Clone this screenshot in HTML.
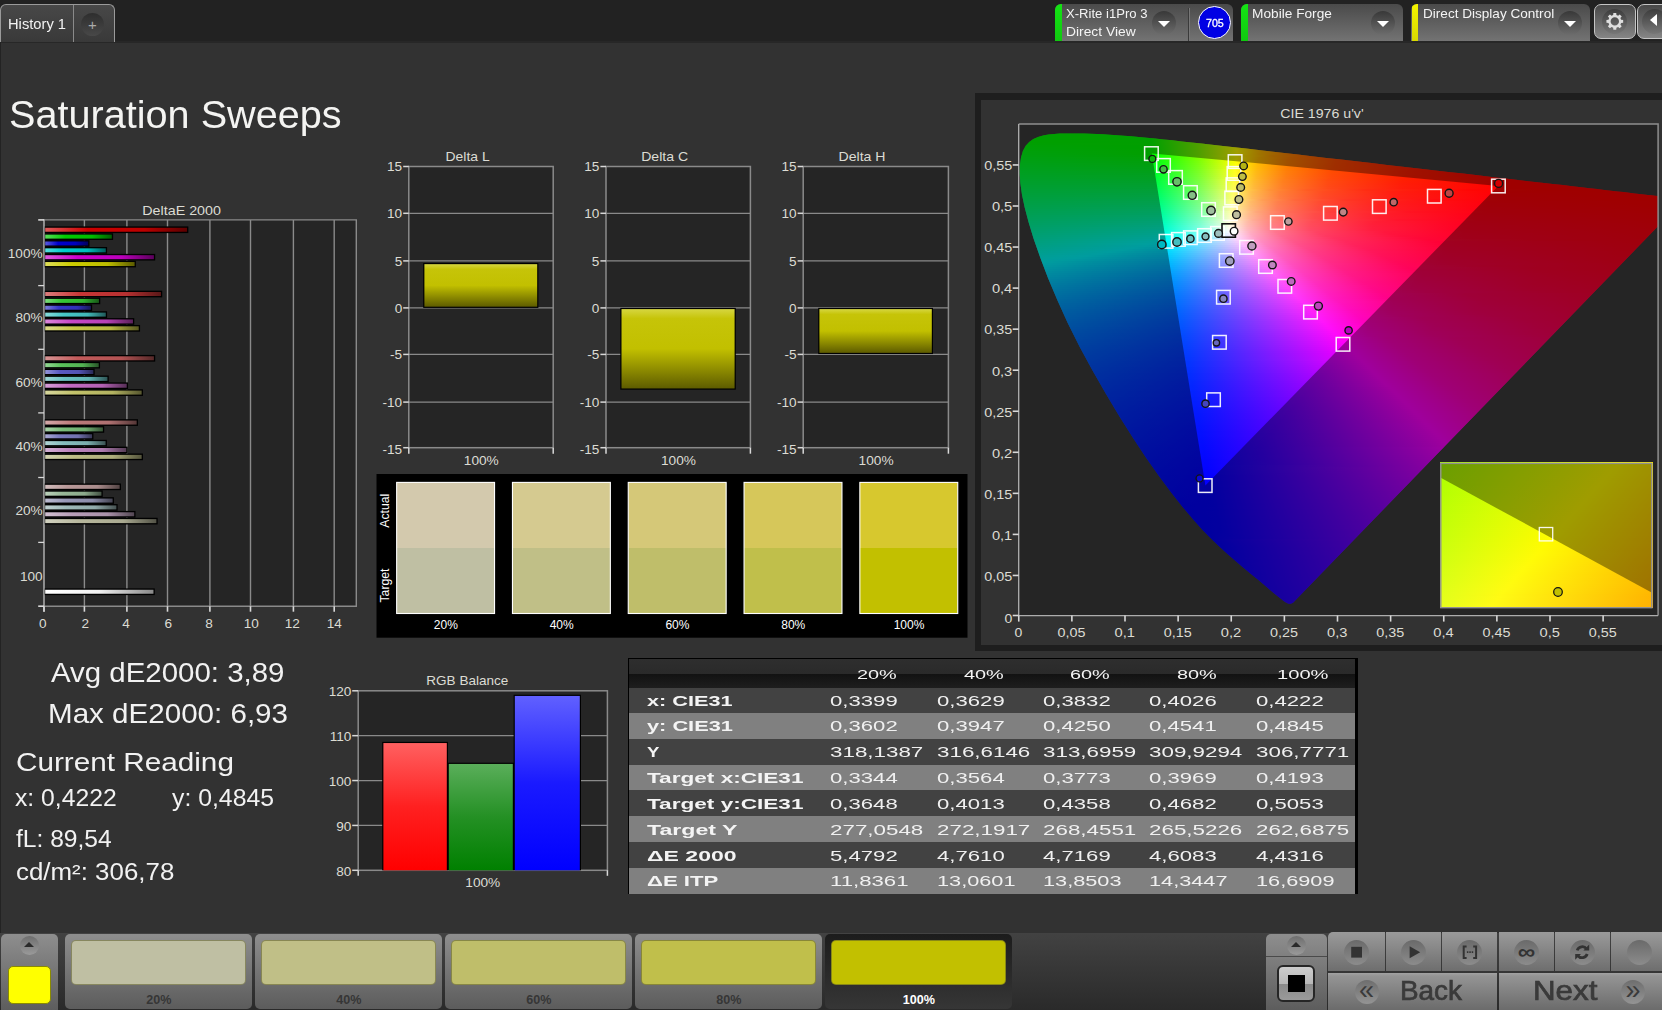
<!DOCTYPE html>
<html lang="en"><head><meta charset="utf-8"><title>Saturation Sweeps</title>
<style>
html,body{margin:0;padding:0;background:#323232;}
body{width:1662px;height:1010px;overflow:hidden;font-family:"Liberation Sans",sans-serif;color:#f0f0f0;}
#app{position:relative;width:1662px;height:1010px;overflow:hidden;background:#323232;}
.a{position:absolute;}
.t{position:absolute;white-space:nowrap;line-height:1;transform-origin:0 50%;}
svg{position:absolute;left:0;top:0;overflow:visible;}
svg text{font-family:"Liberation Sans",sans-serif;}
.cg i{position:absolute;display:block;}

</style></head><body>
<div id="app">
<div class="a" style="left:0;top:0;width:1662px;height:41.2px;background:#222"></div>
<div class="a" style="left:0;top:41.2px;width:1662px;height:1.4px;background:#272727"></div>
<div class="a" style="left:0;top:41px;width:1.3px;height:969px;background:#232323"></div>
<div class="a" style="left:0;top:4px;width:115px;height:37.5px;box-sizing:border-box;border:1px solid #9a9a9a;border-bottom:none;border-radius:6px 6px 0 0;background:linear-gradient(#484848,#393939)"></div>
<div class="a" style="left:73px;top:5px;width:1px;height:37px;background:#8a8a8a"></div>
<div class="t m" style="left:8.00px;top:16.45px;font-size:15.3px;color:#f2f2f2;transform:scaleX(0.9609);">History 1</div>
<div class="a" style="left:81px;top:13px;width:23px;height:23px;border-radius:50%;background:linear-gradient(#2e2e2e,#484848)"></div>
<div class="t" style="left:87px;top:17px;width:11px;text-align:center;font-size:15px;color:#aaa">+</div>
<div class="a" style="left:1054.8px;top:4px;width:178.4px;height:37.4px;border-radius:6px 6px 0 0;overflow:hidden;background:linear-gradient(#4a4a4a,#737373)"><div class="a" style="left:0.3px;top:0;width:6.6px;height:38px;background:linear-gradient(#14e414,#10c810)"></div></div>
<div class="t m" style="left:1066.00px;top:8.52px;font-size:11.9px;color:#f4f4f4;transform:scaleX(1.1011);">X-Rite i1Pro 3</div>
<div class="t m" style="left:1066.00px;top:26.82px;font-size:11.9px;color:#f4f4f4;transform:scaleX(1.1632);">Direct View</div>
<div class="a" style="left:1152.1px;top:11px;width:24px;height:24px;border-radius:50%;background:linear-gradient(#383838,#6c6c6c)"></div>
<div class="a" style="left:1158.1px;top:21px;width:0;height:0;border-left:6px solid transparent;border-right:6px solid transparent;border-top:6.5px solid #fff"></div>
<div class="a" style="left:1188px;top:8px;width:1px;height:33px;background:#3a3a3a"></div><div class="a" style="left:1189px;top:8px;width:1px;height:33px;background:#777"></div>
<div class="a" style="left:1198px;top:6.3px;width:31px;height:31px;border-radius:50%;border:1px solid #fff;background:#0000e4"></div>
<div class="t m" style="left:1206.10px;top:17.52px;font-size:10.6px;color:#fff;transform:scaleX(1.0064);-webkit-text-stroke:.3px #fff;">705</div>
<div class="a" style="left:1241px;top:4px;width:161.8px;height:37.4px;border-radius:6px 6px 0 0;overflow:hidden;background:linear-gradient(#4a4a4a,#737373)"><div class="a" style="left:0.3px;top:0;width:6.6px;height:38px;background:linear-gradient(#14e414,#10c810)"></div></div>
<div class="t m" style="left:1252.20px;top:8.52px;font-size:11.9px;color:#f4f4f4;transform:scaleX(1.1512);">Mobile Forge</div>
<div class="a" style="left:1370.8px;top:11px;width:24px;height:24px;border-radius:50%;background:linear-gradient(#383838,#6c6c6c)"></div>
<div class="a" style="left:1376.8px;top:21px;width:0;height:0;border-left:6px solid transparent;border-right:6px solid transparent;border-top:6.5px solid #fff"></div>
<div class="a" style="left:1411.4px;top:4px;width:178.5px;height:37.4px;border-radius:6px 6px 0 0;overflow:hidden;background:linear-gradient(#4a4a4a,#737373)"><div class="a" style="left:0.3px;top:0;width:6.6px;height:38px;background:linear-gradient(#f4f400,#d8d800)"></div></div>
<div class="t m" style="left:1422.60px;top:8.52px;font-size:11.9px;color:#f4f4f4;transform:scaleX(1.1410);">Direct Display Control</div>
<div class="a" style="left:1558px;top:11px;width:24px;height:24px;border-radius:50%;background:linear-gradient(#383838,#6c6c6c)"></div>
<div class="a" style="left:1564px;top:21px;width:0;height:0;border-left:6px solid transparent;border-right:6px solid transparent;border-top:6.5px solid #fff"></div>
<div class="a" style="left:1594px;top:4px;width:42px;height:35px;box-sizing:border-box;border:1px solid #c4c4c4;border-radius:7px;background:linear-gradient(#484848,#858585)"></div>
<div class="a" style="left:1602.3px;top:9px;width:25px;height:25px;border-radius:50%;background:linear-gradient(#3c3c3c,#777)"></div>
<svg width="1662" height="60" viewBox="0 0 1662 60"><path d="M1613.34,13.03 L1616.26,13.03 L1616.42,15.10 L1618.11,15.81 L1619.69,14.45 L1621.75,16.51 L1620.39,18.09 L1621.10,19.78 L1623.17,19.94 L1623.17,22.86 L1621.10,23.02 L1620.39,24.71 L1621.75,26.29 L1619.69,28.35 L1618.11,26.99 L1616.42,27.70 L1616.26,29.77 L1613.34,29.77 L1613.18,27.70 L1611.49,26.99 L1609.91,28.35 L1607.85,26.29 L1609.21,24.71 L1608.50,23.02 L1606.43,22.86 L1606.43,19.94 L1608.50,19.78 L1609.21,18.09 L1607.85,16.51 L1609.91,14.45 L1611.49,15.81 L1613.18,15.10Z M1610.60,21.40 a4.20,4.20 0 1,0 8.40,0 a4.20,4.20 0 1,0 -8.40,0Z" fill="#dedede" fill-rule="evenodd"/></svg>
<div class="a" style="left:1637px;top:4px;width:42px;height:35px;box-sizing:border-box;border:1px solid #c4c4c4;border-radius:7px;background:linear-gradient(#484848,#858585)"></div>
<div class="a" style="left:1642px;top:9px;width:25px;height:25px;border-radius:50%;background:linear-gradient(#3c3c3c,#777)"></div>
<div class="a" style="left:1650px;top:14.4px;width:0;height:0;border-top:6.2px solid transparent;border-bottom:6.2px solid transparent;border-right:7px solid #fff"></div>
<div class="t m" style="left:8.70px;top:95.11px;font-size:39.2px;color:#f4f4f2;transform:scaleX(1.0111);">Saturation Sweeps</div>
<div class="t m" style="left:50.50px;top:660.12px;font-size:26.9px;color:#f2f2f2;transform:scaleX(1.0946);">Avg dE2000: 3,89</div>
<div class="t m" style="left:48.00px;top:700.52px;font-size:26.9px;color:#f2f2f2;transform:scaleX(1.0996);">Max dE2000: 6,93</div>
<div class="t m" style="left:15.90px;top:749.16px;font-size:26.5px;color:#f2f2f2;transform:scaleX(1.1206);">Current Reading</div>
<div class="t m" style="left:15.30px;top:786.84px;font-size:23.1px;color:#f2f2f2;transform:scaleX(1.0704);">x: 0,4222</div>
<div class="t m" style="left:171.80px;top:786.84px;font-size:23.1px;color:#f2f2f2;transform:scaleX(1.0735);">y: 0,4845</div>
<div class="t m" style="left:15.90px;top:828.24px;font-size:23.1px;color:#f2f2f2;transform:scaleX(1.0646);">fL: 89,54</div>
<div class="t m" style="left:15.90px;top:861.24px;font-size:23.1px;color:#f2f2f2;transform:scaleX(1.1211);">cd/m²: 306,78</div>
<svg width="1662" height="1010" viewBox="0 0 1662 1010"><defs><linearGradient id="hb1"><stop offset="0" stop-color="#de5959"/><stop offset=".3" stop-color="#c00"/><stop offset=".7" stop-color="#bc0000"/><stop offset="1" stop-color="#5c0000"/></linearGradient><linearGradient id="hb2"><stop offset="0" stop-color="#59de59"/><stop offset=".3" stop-color="#0c0"/><stop offset=".7" stop-color="#00bc00"/><stop offset="1" stop-color="#005c00"/></linearGradient><linearGradient id="hb3"><stop offset="0" stop-color="#5959de"/><stop offset=".3" stop-color="#00c"/><stop offset=".7" stop-color="#0000bc"/><stop offset="1" stop-color="#00005c"/></linearGradient><linearGradient id="hb4"><stop offset="0" stop-color="#59dede"/><stop offset=".3" stop-color="#0cc"/><stop offset=".7" stop-color="#00bcbc"/><stop offset="1" stop-color="#005c5c"/></linearGradient><linearGradient id="hb5"><stop offset="0" stop-color="#de59de"/><stop offset=".3" stop-color="#c0c"/><stop offset=".7" stop-color="#bc00bc"/><stop offset="1" stop-color="#5c005c"/></linearGradient><linearGradient id="hb6"><stop offset="0" stop-color="#dede59"/><stop offset=".3" stop-color="#cc0"/><stop offset=".7" stop-color="#bcbc00"/><stop offset="1" stop-color="#5c5c00"/></linearGradient><linearGradient id="hb7"><stop offset="0" stop-color="#db7c7c"/><stop offset=".3" stop-color="#c73636"/><stop offset=".7" stop-color="#b73131"/><stop offset="1" stop-color="#5a1818"/></linearGradient><linearGradient id="hb8"><stop offset="0" stop-color="#7cdb7c"/><stop offset=".3" stop-color="#36c736"/><stop offset=".7" stop-color="#31b731"/><stop offset="1" stop-color="#185a18"/></linearGradient><linearGradient id="hb9"><stop offset="0" stop-color="#7c7cdb"/><stop offset=".3" stop-color="#3636c7"/><stop offset=".7" stop-color="#3131b7"/><stop offset="1" stop-color="#18185a"/></linearGradient><linearGradient id="hb10"><stop offset="0" stop-color="#87dbdb"/><stop offset=".3" stop-color="#47c7c7"/><stop offset=".7" stop-color="#41b7b7"/><stop offset="1" stop-color="#205a5a"/></linearGradient><linearGradient id="hb11"><stop offset="0" stop-color="#db87db"/><stop offset=".3" stop-color="#c747c7"/><stop offset=".7" stop-color="#b741b7"/><stop offset="1" stop-color="#5a205a"/></linearGradient><linearGradient id="hb12"><stop offset="0" stop-color="#dbdb87"/><stop offset=".3" stop-color="#c7c747"/><stop offset=".7" stop-color="#b7b741"/><stop offset="1" stop-color="#5a5a20"/></linearGradient><linearGradient id="hb13"><stop offset="0" stop-color="#d79494"/><stop offset=".3" stop-color="#c25a5a"/><stop offset=".7" stop-color="#b35353"/><stop offset="1" stop-color="#572929"/></linearGradient><linearGradient id="hb14"><stop offset="0" stop-color="#94d794"/><stop offset=".3" stop-color="#5ac25a"/><stop offset=".7" stop-color="#53b353"/><stop offset="1" stop-color="#295729"/></linearGradient><linearGradient id="hb15"><stop offset="0" stop-color="#9494d7"/><stop offset=".3" stop-color="#5a5ac2"/><stop offset=".7" stop-color="#5353b3"/><stop offset="1" stop-color="#292957"/></linearGradient><linearGradient id="hb16"><stop offset="0" stop-color="#9ed7d7"/><stop offset=".3" stop-color="#6ac2c2"/><stop offset=".7" stop-color="#61b3b3"/><stop offset="1" stop-color="#2f5757"/></linearGradient><linearGradient id="hb17"><stop offset="0" stop-color="#d79ed7"/><stop offset=".3" stop-color="#c26ac2"/><stop offset=".7" stop-color="#b361b3"/><stop offset="1" stop-color="#572f57"/></linearGradient><linearGradient id="hb18"><stop offset="0" stop-color="#d7d79e"/><stop offset=".3" stop-color="#c2c26a"/><stop offset=".7" stop-color="#b3b361"/><stop offset="1" stop-color="#57572f"/></linearGradient><linearGradient id="hb19"><stop offset="0" stop-color="#d4a9a9"/><stop offset=".3" stop-color="#bd7a7a"/><stop offset=".7" stop-color="#ae7171"/><stop offset="1" stop-color="#553737"/></linearGradient><linearGradient id="hb20"><stop offset="0" stop-color="#a9d4a9"/><stop offset=".3" stop-color="#7abd7a"/><stop offset=".7" stop-color="#71ae71"/><stop offset="1" stop-color="#375537"/></linearGradient><linearGradient id="hb21"><stop offset="0" stop-color="#a9a9d4"/><stop offset=".3" stop-color="#7a7abd"/><stop offset=".7" stop-color="#7171ae"/><stop offset="1" stop-color="#373755"/></linearGradient><linearGradient id="hb22"><stop offset="0" stop-color="#b0d4d4"/><stop offset=".3" stop-color="#85bdbd"/><stop offset=".7" stop-color="#7baeae"/><stop offset="1" stop-color="#3c5555"/></linearGradient><linearGradient id="hb23"><stop offset="0" stop-color="#d4b0d4"/><stop offset=".3" stop-color="#bd85bd"/><stop offset=".7" stop-color="#ae7bae"/><stop offset="1" stop-color="#553c55"/></linearGradient><linearGradient id="hb24"><stop offset="0" stop-color="#d4d4b0"/><stop offset=".3" stop-color="#bdbd85"/><stop offset=".7" stop-color="#aeae7b"/><stop offset="1" stop-color="#55553c"/></linearGradient><linearGradient id="hb25"><stop offset="0" stop-color="#d1bcbc"/><stop offset=".3" stop-color="#b89898"/><stop offset=".7" stop-color="#aa8c8c"/><stop offset="1" stop-color="#534444"/></linearGradient><linearGradient id="hb26"><stop offset="0" stop-color="#bcd1bc"/><stop offset=".3" stop-color="#98b898"/><stop offset=".7" stop-color="#8caa8c"/><stop offset="1" stop-color="#445344"/></linearGradient><linearGradient id="hb27"><stop offset="0" stop-color="#bcbcd1"/><stop offset=".3" stop-color="#9898b8"/><stop offset=".7" stop-color="#8c8caa"/><stop offset="1" stop-color="#444453"/></linearGradient><linearGradient id="hb28"><stop offset="0" stop-color="#c0d1d1"/><stop offset=".3" stop-color="#9eb8b8"/><stop offset=".7" stop-color="#91aaaa"/><stop offset="1" stop-color="#475353"/></linearGradient><linearGradient id="hb29"><stop offset="0" stop-color="#d1c0d1"/><stop offset=".3" stop-color="#b89eb8"/><stop offset=".7" stop-color="#aa91aa"/><stop offset="1" stop-color="#534753"/></linearGradient><linearGradient id="hb30"><stop offset="0" stop-color="#d1d1c0"/><stop offset=".3" stop-color="#b8b89e"/><stop offset=".7" stop-color="#aaaa91"/><stop offset="1" stop-color="#535347"/></linearGradient><linearGradient id="hbw"><stop offset="0" stop-color="#fff"/><stop offset=".5" stop-color="#f0f0f0"/><stop offset="1" stop-color="#8a8a8a"/></linearGradient><linearGradient id="yb" x1="0" y1="0" x2="0" y2="1"><stop offset="0" stop-color="#d6d640"/><stop offset=".12" stop-color="#c6c408"/><stop offset=".5" stop-color="#c2c000"/><stop offset="1" stop-color="#5e5c00"/></linearGradient><linearGradient id="gr" x1="0" y1="0" x2="0" y2="1"><stop offset="0" stop-color="#ff6060"/><stop offset=".5" stop-color="#ff2020"/><stop offset="1" stop-color="#ff0000"/></linearGradient><linearGradient id="gg" x1="0" y1="0" x2="0" y2="1"><stop offset="0" stop-color="#5aae5a"/><stop offset=".5" stop-color="#249024"/><stop offset="1" stop-color="#008000"/></linearGradient><linearGradient id="gb" x1="0" y1="0" x2="0" y2="1"><stop offset="0" stop-color="#6060ff"/><stop offset=".5" stop-color="#1a1aff"/><stop offset="1" stop-color="#0000ff"/></linearGradient></defs>
<rect x="44" y="219.9" width="312.3" height="386.3" fill="#252525" stroke="none" stroke-width="1"/>
<path d="M84.4,219.9L84.4,606.2" stroke="#8a8a8a" stroke-width="1.4" fill="none"/>
<path d="M126.9,219.9L126.9,606.2" stroke="#8a8a8a" stroke-width="1.4" fill="none"/>
<path d="M167.5,219.9L167.5,606.2" stroke="#8a8a8a" stroke-width="1.4" fill="none"/>
<path d="M209.9,219.9L209.9,606.2" stroke="#8a8a8a" stroke-width="1.4" fill="none"/>
<path d="M250.5,219.9L250.5,606.2" stroke="#8a8a8a" stroke-width="1.4" fill="none"/>
<path d="M293.4,219.9L293.4,606.2" stroke="#8a8a8a" stroke-width="1.4" fill="none"/>
<path d="M334.2,219.9L334.2,606.2" stroke="#8a8a8a" stroke-width="1.4" fill="none"/>
<path d="M44,219.9H356.3V606.2H44" stroke="#8a8a8a" stroke-width="1.4" fill="none"/>
<path d="M44,219.2L44,611.7" stroke="#a8a8a8" stroke-width="1.6" fill="none"/>
<path d="M44,606.2L44,611.7" stroke="#d8d8d8" stroke-width="1.6" fill="none"/>
<text x="42.9" y="627.7" font-size="13.6" text-anchor="middle" fill="#dcdcd4">0</text>
<path d="M84.4,606.2L84.4,611.7" stroke="#d8d8d8" stroke-width="1.6" fill="none"/>
<text x="85.2" y="627.7" font-size="13.6" text-anchor="middle" fill="#dcdcd4">2</text>
<path d="M126.9,606.2L126.9,611.7" stroke="#d8d8d8" stroke-width="1.6" fill="none"/>
<text x="126.1" y="627.7" font-size="13.6" text-anchor="middle" fill="#dcdcd4">4</text>
<path d="M167.5,606.2L167.5,611.7" stroke="#d8d8d8" stroke-width="1.6" fill="none"/>
<text x="168.2" y="627.7" font-size="13.6" text-anchor="middle" fill="#dcdcd4">6</text>
<path d="M209.9,606.2L209.9,611.7" stroke="#d8d8d8" stroke-width="1.6" fill="none"/>
<text x="209.1" y="627.7" font-size="13.6" text-anchor="middle" fill="#dcdcd4">8</text>
<path d="M250.5,606.2L250.5,611.7" stroke="#d8d8d8" stroke-width="1.6" fill="none"/>
<text x="251.2" y="627.7" font-size="13.6" text-anchor="middle" fill="#dcdcd4">10</text>
<path d="M293.4,606.2L293.4,611.7" stroke="#d8d8d8" stroke-width="1.6" fill="none"/>
<text x="292.3" y="627.7" font-size="13.6" text-anchor="middle" fill="#dcdcd4">12</text>
<path d="M334.2,606.2L334.2,611.7" stroke="#d8d8d8" stroke-width="1.6" fill="none"/>
<text x="334.2" y="627.7" font-size="13.6" text-anchor="middle" fill="#dcdcd4">14</text>
<path d="M38.2,219.9L44,219.9" stroke="#d8d8d8" stroke-width="1.6" fill="none"/>
<path d="M38.2,285.6L44,285.6" stroke="#d8d8d8" stroke-width="1.3" fill="none"/>
<path d="M38.2,349.3L44,349.3" stroke="#d8d8d8" stroke-width="1.3" fill="none"/>
<path d="M38.2,412.9L44,412.9" stroke="#d8d8d8" stroke-width="1.3" fill="none"/>
<path d="M38.2,477.5L44,477.5" stroke="#d8d8d8" stroke-width="1.3" fill="none"/>
<path d="M38.2,542.4L44,542.4" stroke="#d8d8d8" stroke-width="1.3" fill="none"/>
<path d="M38.2,606.2L44,606.2" stroke="#d8d8d8" stroke-width="1.6" fill="none"/>
<text x="42.6" y="258.1" font-size="13.6" text-anchor="end" fill="#dcdcd4">100%</text>
<text x="42.6" y="322" font-size="13.6" text-anchor="end" fill="#dcdcd4">80%</text>
<text x="42.6" y="387.2" font-size="13.6" text-anchor="end" fill="#dcdcd4">60%</text>
<text x="42.6" y="450.7" font-size="13.6" text-anchor="end" fill="#dcdcd4">40%</text>
<text x="42.6" y="515" font-size="13.6" text-anchor="end" fill="#dcdcd4">20%</text>
<text x="42.6" y="580.9" font-size="13.6" text-anchor="end" fill="#dcdcd4">100</text>
<text x="181.6" y="215" font-size="13.6" text-anchor="middle" fill="#dcdcd4" textLength="78.7" lengthAdjust="spacingAndGlyphs">DeltaE 2000</text>
<rect x="44.8" y="226.4" width="143.559" height="6.7" fill="#000" stroke="none" stroke-width="1"/>
<rect x="45.2" y="227.75" width="141.859" height="4" fill="url(#hb1)" stroke="none" stroke-width="1"/>
<rect x="44.8" y="233.26" width="68.309" height="6.7" fill="#000" stroke="none" stroke-width="1"/>
<rect x="45.2" y="234.61" width="66.609" height="4" fill="url(#hb2)" stroke="none" stroke-width="1"/>
<rect x="44.8" y="240.12" width="44.6768" height="6.7" fill="#000" stroke="none" stroke-width="1"/>
<rect x="45.2" y="241.47" width="42.9768" height="4" fill="url(#hb3)" stroke="none" stroke-width="1"/>
<rect x="44.8" y="246.98" width="62.2973" height="6.7" fill="#000" stroke="none" stroke-width="1"/>
<rect x="45.2" y="248.33" width="60.5973" height="4" fill="url(#hb4)" stroke="none" stroke-width="1"/>
<rect x="44.8" y="253.84" width="110.391" height="6.7" fill="#000" stroke="none" stroke-width="1"/>
<rect x="45.2" y="255.19" width="108.691" height="4" fill="url(#hb5)" stroke="none" stroke-width="1"/>
<rect x="44.8" y="260.7" width="91.112" height="6.7" fill="#000" stroke="none" stroke-width="1"/>
<rect x="45.2" y="262.05" width="89.412" height="4" fill="url(#hb6)" stroke="none" stroke-width="1"/>
<rect x="44.8" y="290.67" width="117.439" height="6.7" fill="#000" stroke="none" stroke-width="1"/>
<rect x="45.2" y="292.02" width="115.739" height="4" fill="url(#hb7)" stroke="none" stroke-width="1"/>
<rect x="44.8" y="297.53" width="55.4564" height="6.7" fill="#000" stroke="none" stroke-width="1"/>
<rect x="45.2" y="298.88" width="53.7564" height="4" fill="url(#hb8)" stroke="none" stroke-width="1"/>
<rect x="44.8" y="304.39" width="47.3717" height="6.7" fill="#000" stroke="none" stroke-width="1"/>
<rect x="45.2" y="305.74" width="45.6717" height="4" fill="url(#hb9)" stroke="none" stroke-width="1"/>
<rect x="44.8" y="311.25" width="62.2973" height="6.7" fill="#000" stroke="none" stroke-width="1"/>
<rect x="45.2" y="312.6" width="60.5973" height="4" fill="url(#hb10)" stroke="none" stroke-width="1"/>
<rect x="44.8" y="318.11" width="89.4536" height="6.7" fill="#000" stroke="none" stroke-width="1"/>
<rect x="45.2" y="319.46" width="87.7536" height="4" fill="url(#hb11)" stroke="none" stroke-width="1"/>
<rect x="44.8" y="324.97" width="95.258" height="6.7" fill="#000" stroke="none" stroke-width="1"/>
<rect x="45.2" y="326.32" width="93.558" height="4" fill="url(#hb12)" stroke="none" stroke-width="1"/>
<rect x="44.8" y="354.94" width="110.391" height="6.7" fill="#000" stroke="none" stroke-width="1"/>
<rect x="45.2" y="356.29" width="108.691" height="4" fill="url(#hb13)" stroke="none" stroke-width="1"/>
<rect x="44.8" y="361.8" width="55.2491" height="6.7" fill="#000" stroke="none" stroke-width="1"/>
<rect x="45.2" y="363.15" width="53.5491" height="4" fill="url(#hb14)" stroke="none" stroke-width="1"/>
<rect x="44.8" y="368.66" width="49.8593" height="6.7" fill="#000" stroke="none" stroke-width="1"/>
<rect x="45.2" y="370.01" width="48.1593" height="4" fill="url(#hb15)" stroke="none" stroke-width="1"/>
<rect x="44.8" y="375.52" width="63.9557" height="6.7" fill="#000" stroke="none" stroke-width="1"/>
<rect x="45.2" y="376.87" width="62.2557" height="4" fill="url(#hb16)" stroke="none" stroke-width="1"/>
<rect x="44.8" y="382.38" width="83.2346" height="6.7" fill="#000" stroke="none" stroke-width="1"/>
<rect x="45.2" y="383.73" width="81.5346" height="4" fill="url(#hb17)" stroke="none" stroke-width="1"/>
<rect x="44.8" y="389.24" width="98.1602" height="6.7" fill="#000" stroke="none" stroke-width="1"/>
<rect x="45.2" y="390.59" width="96.4602" height="4" fill="url(#hb18)" stroke="none" stroke-width="1"/>
<rect x="44.8" y="419.21" width="93.185" height="6.7" fill="#000" stroke="none" stroke-width="1"/>
<rect x="45.2" y="420.56" width="91.485" height="4" fill="url(#hb19)" stroke="none" stroke-width="1"/>
<rect x="44.8" y="426.07" width="59.3951" height="6.7" fill="#000" stroke="none" stroke-width="1"/>
<rect x="45.2" y="427.42" width="57.6951" height="4" fill="url(#hb20)" stroke="none" stroke-width="1"/>
<rect x="44.8" y="432.93" width="48.6155" height="6.7" fill="#000" stroke="none" stroke-width="1"/>
<rect x="45.2" y="434.28" width="46.9155" height="4" fill="url(#hb21)" stroke="none" stroke-width="1"/>
<rect x="44.8" y="439.79" width="62.09" height="6.7" fill="#000" stroke="none" stroke-width="1"/>
<rect x="45.2" y="441.14" width="60.39" height="4" fill="url(#hb22)" stroke="none" stroke-width="1"/>
<rect x="44.8" y="446.65" width="82.82" height="6.7" fill="#000" stroke="none" stroke-width="1"/>
<rect x="45.2" y="448" width="81.12" height="4" fill="url(#hb23)" stroke="none" stroke-width="1"/>
<rect x="44.8" y="453.51" width="98.1602" height="6.7" fill="#000" stroke="none" stroke-width="1"/>
<rect x="45.2" y="454.86" width="96.4602" height="4" fill="url(#hb24)" stroke="none" stroke-width="1"/>
<rect x="44.8" y="483.48" width="76.1864" height="6.7" fill="#000" stroke="none" stroke-width="1"/>
<rect x="45.2" y="484.83" width="74.4864" height="4" fill="url(#hb25)" stroke="none" stroke-width="1"/>
<rect x="44.8" y="490.34" width="57.944" height="6.7" fill="#000" stroke="none" stroke-width="1"/>
<rect x="45.2" y="491.69" width="56.244" height="4" fill="url(#hb26)" stroke="none" stroke-width="1"/>
<rect x="44.8" y="497.2" width="69.1382" height="6.7" fill="#000" stroke="none" stroke-width="1"/>
<rect x="45.2" y="498.55" width="67.4382" height="4" fill="url(#hb27)" stroke="none" stroke-width="1"/>
<rect x="44.8" y="504.06" width="72.8696" height="6.7" fill="#000" stroke="none" stroke-width="1"/>
<rect x="45.2" y="505.41" width="71.1696" height="4" fill="url(#hb28)" stroke="none" stroke-width="1"/>
<rect x="44.8" y="510.92" width="90.6974" height="6.7" fill="#000" stroke="none" stroke-width="1"/>
<rect x="45.2" y="512.27" width="88.9974" height="4" fill="url(#hb29)" stroke="none" stroke-width="1"/>
<rect x="44.8" y="517.78" width="112.879" height="6.7" fill="#000" stroke="none" stroke-width="1"/>
<rect x="45.2" y="519.13" width="111.179" height="4" fill="url(#hb30)" stroke="none" stroke-width="1"/>
<rect x="44.8" y="588.4" width="109.976" height="6.7" fill="#000" stroke="none" stroke-width="1"/>
<rect x="45.2" y="589.75" width="108.276" height="4" fill="url(#hbw)" stroke="none" stroke-width="1"/>
<rect x="408.8" y="166.5" width="144.4" height="281.2" fill="#252525" stroke="none" stroke-width="1"/>
<path d="M408.8,213.3L553.2,213.3" stroke="#8a8a8a" stroke-width="1.3" fill="none"/>
<path d="M408.8,260.9L553.2,260.9" stroke="#8a8a8a" stroke-width="1.3" fill="none"/>
<path d="M408.8,307.9L553.2,307.9" stroke="#8a8a8a" stroke-width="1.3" fill="none"/>
<path d="M408.8,354.4L553.2,354.4" stroke="#8a8a8a" stroke-width="1.3" fill="none"/>
<path d="M408.8,402.1L553.2,402.1" stroke="#8a8a8a" stroke-width="1.3" fill="none"/>
<rect x="408.8" y="166.5" width="144.4" height="281.2" fill="none" stroke="#8a8a8a" stroke-width="1.5"/>
<path d="M403.2,166.5L408.8,166.5" stroke="#d8d8d8" stroke-width="1.5" fill="none"/>
<text x="402.2" y="171.3" font-size="13.6" text-anchor="end" fill="#dcdcd4">15</text>
<path d="M403.2,213.3L408.8,213.3" stroke="#d8d8d8" stroke-width="1.5" fill="none"/>
<text x="402.2" y="218.1" font-size="13.6" text-anchor="end" fill="#dcdcd4">10</text>
<path d="M403.2,260.9L408.8,260.9" stroke="#d8d8d8" stroke-width="1.5" fill="none"/>
<text x="402.2" y="265.7" font-size="13.6" text-anchor="end" fill="#dcdcd4">5</text>
<path d="M403.2,307.9L408.8,307.9" stroke="#d8d8d8" stroke-width="1.5" fill="none"/>
<text x="402.2" y="312.7" font-size="13.6" text-anchor="end" fill="#dcdcd4">0</text>
<path d="M403.2,354.4L408.8,354.4" stroke="#d8d8d8" stroke-width="1.5" fill="none"/>
<text x="402.2" y="359.2" font-size="13.6" text-anchor="end" fill="#dcdcd4">-5</text>
<path d="M403.2,402.1L408.8,402.1" stroke="#d8d8d8" stroke-width="1.5" fill="none"/>
<text x="402.2" y="406.9" font-size="13.6" text-anchor="end" fill="#dcdcd4">-10</text>
<path d="M403.2,447.7L408.8,447.7" stroke="#d8d8d8" stroke-width="1.5" fill="none"/>
<text x="402.2" y="454.3" font-size="13.6" text-anchor="end" fill="#dcdcd4">-15</text>
<path d="M408.8,447.7L408.8,453.7" stroke="#d8d8d8" stroke-width="1.5" fill="none"/>
<path d="M553.2,447.7L553.2,453.7" stroke="#d8d8d8" stroke-width="1.5" fill="none"/>
<text x="481.3" y="464.5" font-size="13.6" text-anchor="middle" fill="#dcdcd4" textLength="35" lengthAdjust="spacingAndGlyphs">100%</text>
<text x="467.6" y="160.7" font-size="13.6" text-anchor="middle" fill="#dcdcd4" textLength="44.1" lengthAdjust="spacingAndGlyphs">Delta L</text>
<rect x="423.2" y="262.967" width="115.2" height="44.9334" fill="#000" stroke="none" stroke-width="1"/>
<rect x="424.4" y="264.167" width="112.8" height="42.5334" fill="url(#yb)" stroke="none" stroke-width="1"/>
<rect x="606" y="166.5" width="144.4" height="281.2" fill="#252525" stroke="none" stroke-width="1"/>
<path d="M606,213.3L750.4,213.3" stroke="#8a8a8a" stroke-width="1.3" fill="none"/>
<path d="M606,260.9L750.4,260.9" stroke="#8a8a8a" stroke-width="1.3" fill="none"/>
<path d="M606,307.9L750.4,307.9" stroke="#8a8a8a" stroke-width="1.3" fill="none"/>
<path d="M606,354.4L750.4,354.4" stroke="#8a8a8a" stroke-width="1.3" fill="none"/>
<path d="M606,402.1L750.4,402.1" stroke="#8a8a8a" stroke-width="1.3" fill="none"/>
<rect x="606" y="166.5" width="144.4" height="281.2" fill="none" stroke="#8a8a8a" stroke-width="1.5"/>
<path d="M600.4,166.5L606,166.5" stroke="#d8d8d8" stroke-width="1.5" fill="none"/>
<text x="599.4" y="171.3" font-size="13.6" text-anchor="end" fill="#dcdcd4">15</text>
<path d="M600.4,213.3L606,213.3" stroke="#d8d8d8" stroke-width="1.5" fill="none"/>
<text x="599.4" y="218.1" font-size="13.6" text-anchor="end" fill="#dcdcd4">10</text>
<path d="M600.4,260.9L606,260.9" stroke="#d8d8d8" stroke-width="1.5" fill="none"/>
<text x="599.4" y="265.7" font-size="13.6" text-anchor="end" fill="#dcdcd4">5</text>
<path d="M600.4,307.9L606,307.9" stroke="#d8d8d8" stroke-width="1.5" fill="none"/>
<text x="599.4" y="312.7" font-size="13.6" text-anchor="end" fill="#dcdcd4">0</text>
<path d="M600.4,354.4L606,354.4" stroke="#d8d8d8" stroke-width="1.5" fill="none"/>
<text x="599.4" y="359.2" font-size="13.6" text-anchor="end" fill="#dcdcd4">-5</text>
<path d="M600.4,402.1L606,402.1" stroke="#d8d8d8" stroke-width="1.5" fill="none"/>
<text x="599.4" y="406.9" font-size="13.6" text-anchor="end" fill="#dcdcd4">-10</text>
<path d="M600.4,447.7L606,447.7" stroke="#d8d8d8" stroke-width="1.5" fill="none"/>
<text x="599.4" y="454.3" font-size="13.6" text-anchor="end" fill="#dcdcd4">-15</text>
<path d="M606,447.7L606,453.7" stroke="#d8d8d8" stroke-width="1.5" fill="none"/>
<path d="M750.4,447.7L750.4,453.7" stroke="#d8d8d8" stroke-width="1.5" fill="none"/>
<text x="678.5" y="464.5" font-size="13.6" text-anchor="middle" fill="#dcdcd4" textLength="35" lengthAdjust="spacingAndGlyphs">100%</text>
<text x="664.7" y="160.7" font-size="13.6" text-anchor="middle" fill="#dcdcd4" textLength="47" lengthAdjust="spacingAndGlyphs">Delta C</text>
<rect x="620.3" y="307.9" width="115.5" height="81.7656" fill="#000" stroke="none" stroke-width="1"/>
<rect x="621.5" y="309.1" width="113.1" height="79.3656" fill="url(#yb)" stroke="none" stroke-width="1"/>
<rect x="803.2" y="166.5" width="145.2" height="281.2" fill="#252525" stroke="none" stroke-width="1"/>
<path d="M803.2,213.3L948.4,213.3" stroke="#8a8a8a" stroke-width="1.3" fill="none"/>
<path d="M803.2,260.9L948.4,260.9" stroke="#8a8a8a" stroke-width="1.3" fill="none"/>
<path d="M803.2,307.9L948.4,307.9" stroke="#8a8a8a" stroke-width="1.3" fill="none"/>
<path d="M803.2,354.4L948.4,354.4" stroke="#8a8a8a" stroke-width="1.3" fill="none"/>
<path d="M803.2,402.1L948.4,402.1" stroke="#8a8a8a" stroke-width="1.3" fill="none"/>
<rect x="803.2" y="166.5" width="145.2" height="281.2" fill="none" stroke="#8a8a8a" stroke-width="1.5"/>
<path d="M797.6,166.5L803.2,166.5" stroke="#d8d8d8" stroke-width="1.5" fill="none"/>
<text x="796.6" y="171.3" font-size="13.6" text-anchor="end" fill="#dcdcd4">15</text>
<path d="M797.6,213.3L803.2,213.3" stroke="#d8d8d8" stroke-width="1.5" fill="none"/>
<text x="796.6" y="218.1" font-size="13.6" text-anchor="end" fill="#dcdcd4">10</text>
<path d="M797.6,260.9L803.2,260.9" stroke="#d8d8d8" stroke-width="1.5" fill="none"/>
<text x="796.6" y="265.7" font-size="13.6" text-anchor="end" fill="#dcdcd4">5</text>
<path d="M797.6,307.9L803.2,307.9" stroke="#d8d8d8" stroke-width="1.5" fill="none"/>
<text x="796.6" y="312.7" font-size="13.6" text-anchor="end" fill="#dcdcd4">0</text>
<path d="M797.6,354.4L803.2,354.4" stroke="#d8d8d8" stroke-width="1.5" fill="none"/>
<text x="796.6" y="359.2" font-size="13.6" text-anchor="end" fill="#dcdcd4">-5</text>
<path d="M797.6,402.1L803.2,402.1" stroke="#d8d8d8" stroke-width="1.5" fill="none"/>
<text x="796.6" y="406.9" font-size="13.6" text-anchor="end" fill="#dcdcd4">-10</text>
<path d="M797.6,447.7L803.2,447.7" stroke="#d8d8d8" stroke-width="1.5" fill="none"/>
<text x="796.6" y="454.3" font-size="13.6" text-anchor="end" fill="#dcdcd4">-15</text>
<path d="M803.2,447.7L803.2,453.7" stroke="#d8d8d8" stroke-width="1.5" fill="none"/>
<path d="M948.4,447.7L948.4,453.7" stroke="#d8d8d8" stroke-width="1.5" fill="none"/>
<text x="876.1" y="464.5" font-size="13.6" text-anchor="middle" fill="#dcdcd4" textLength="35" lengthAdjust="spacingAndGlyphs">100%</text>
<text x="862" y="160.7" font-size="13.6" text-anchor="middle" fill="#dcdcd4" textLength="47" lengthAdjust="spacingAndGlyphs">Delta H</text>
<rect x="818.2" y="307.9" width="114.8" height="46.158" fill="#000" stroke="none" stroke-width="1"/>
<rect x="819.4" y="309.1" width="112.4" height="43.758" fill="url(#yb)" stroke="none" stroke-width="1"/>
<rect x="376.5" y="474" width="591" height="163.7" fill="#000" stroke="none" stroke-width="1"/>
<rect x="396.65" y="482.4" width="97.9" height="65.6" fill="#d3c9ad" stroke="none" stroke-width="1"/>
<rect x="396.65" y="548" width="97.9" height="65.5" fill="#bfbfa3" stroke="none" stroke-width="1"/>
<rect x="396.65" y="482.4" width="97.9" height="131.1" fill="none" stroke="#fff" stroke-width="1.1"/>
<text x="445.85" y="628.5" font-size="12" text-anchor="middle" fill="#fff">20%</text>
<rect x="512.45" y="482.4" width="97.9" height="65.6" fill="#d5ca90" stroke="none" stroke-width="1"/>
<rect x="512.45" y="548" width="97.9" height="65.5" fill="#c0bf87" stroke="none" stroke-width="1"/>
<rect x="512.45" y="482.4" width="97.9" height="131.1" fill="none" stroke="#fff" stroke-width="1.1"/>
<text x="561.65" y="628.5" font-size="12" text-anchor="middle" fill="#fff">40%</text>
<rect x="628.25" y="482.4" width="97.9" height="65.6" fill="#d5c878" stroke="none" stroke-width="1"/>
<rect x="628.25" y="548" width="97.9" height="65.5" fill="#bfbe6a" stroke="none" stroke-width="1"/>
<rect x="628.25" y="482.4" width="97.9" height="131.1" fill="none" stroke="#fff" stroke-width="1.1"/>
<text x="677.45" y="628.5" font-size="12" text-anchor="middle" fill="#fff">60%</text>
<rect x="744.05" y="482.4" width="97.9" height="65.6" fill="#d6c75a" stroke="none" stroke-width="1"/>
<rect x="744.05" y="548" width="97.9" height="65.5" fill="#c0bf4b" stroke="none" stroke-width="1"/>
<rect x="744.05" y="482.4" width="97.9" height="131.1" fill="none" stroke="#fff" stroke-width="1.1"/>
<text x="793.25" y="628.5" font-size="12" text-anchor="middle" fill="#fff">80%</text>
<rect x="859.85" y="482.4" width="97.9" height="65.6" fill="#d7c82e" stroke="none" stroke-width="1"/>
<rect x="859.85" y="548" width="97.9" height="65.5" fill="#c2c000" stroke="none" stroke-width="1"/>
<rect x="859.85" y="482.4" width="97.9" height="131.1" fill="none" stroke="#fff" stroke-width="1.1"/>
<text x="909.05" y="628.5" font-size="12" text-anchor="middle" fill="#fff">100%</text>
<text transform="translate(388.7,510.8) rotate(-90)" font-size="12.2" text-anchor="middle" fill="#fff" textLength="33.8" lengthAdjust="spacingAndGlyphs">Actual</text>
<text transform="translate(388.7,585.5) rotate(-90)" font-size="12.2" text-anchor="middle" fill="#fff" textLength="34" lengthAdjust="spacingAndGlyphs">Target</text>
<rect x="358.2" y="690.8" width="249.2" height="179.5" fill="#252525" stroke="none" stroke-width="1"/>
<path d="M358.2,735.675L607.4,735.675" stroke="#8a8a8a" stroke-width="1.3" fill="none"/>
<path d="M358.2,780.55L607.4,780.55" stroke="#8a8a8a" stroke-width="1.3" fill="none"/>
<path d="M358.2,825.425L607.4,825.425" stroke="#8a8a8a" stroke-width="1.3" fill="none"/>
<rect x="358.2" y="690.8" width="249.2" height="179.5" fill="none" stroke="#8a8a8a" stroke-width="1.5"/>
<path d="M352.2,690.8L358.2,690.8" stroke="#d8d8d8" stroke-width="1.5" fill="none"/>
<text x="351.4" y="696" font-size="13.6" text-anchor="end" fill="#dcdcd4">120</text>
<path d="M352.2,735.675L358.2,735.675" stroke="#d8d8d8" stroke-width="1.5" fill="none"/>
<text x="351.4" y="740.875" font-size="13.6" text-anchor="end" fill="#dcdcd4">110</text>
<path d="M352.2,780.55L358.2,780.55" stroke="#d8d8d8" stroke-width="1.5" fill="none"/>
<text x="351.4" y="785.75" font-size="13.6" text-anchor="end" fill="#dcdcd4">100</text>
<path d="M352.2,825.425L358.2,825.425" stroke="#d8d8d8" stroke-width="1.5" fill="none"/>
<text x="351.4" y="830.625" font-size="13.6" text-anchor="end" fill="#dcdcd4">90</text>
<path d="M352.2,870.3L358.2,870.3" stroke="#d8d8d8" stroke-width="1.5" fill="none"/>
<text x="351.4" y="875.5" font-size="13.6" text-anchor="end" fill="#dcdcd4">80</text>
<path d="M358.2,870.3L358.2,875.8" stroke="#d8d8d8" stroke-width="1.5" fill="none"/>
<path d="M607.4,870.3L607.4,875.8" stroke="#d8d8d8" stroke-width="1.5" fill="none"/>
<text x="482.8" y="886.8" font-size="13.6" text-anchor="middle" fill="#dcdcd4" textLength="35" lengthAdjust="spacingAndGlyphs">100%</text>
<text x="467.3" y="685" font-size="13.6" text-anchor="middle" fill="#dcdcd4" textLength="81.9" lengthAdjust="spacingAndGlyphs">RGB Balance</text>
<rect x="382.2" y="741.855" width="65.8" height="128.445" fill="#000" stroke="none" stroke-width="1"/>
<rect x="383.4" y="743.055" width="63.4" height="127.245" fill="url(#gr)" stroke="none" stroke-width="1"/>
<rect x="447.6" y="762.722" width="66.4" height="107.578" fill="#000" stroke="none" stroke-width="1"/>
<rect x="448.8" y="763.922" width="64" height="106.378" fill="url(#gg)" stroke="none" stroke-width="1"/>
<rect x="513.6" y="694.736" width="67.4" height="175.564" fill="#000" stroke="none" stroke-width="1"/>
<rect x="514.8" y="695.936" width="65" height="174.364" fill="url(#gb)" stroke="none" stroke-width="1"/>
</svg>
<div class="a" style="left:627.9px;top:657.6px;width:730.2px;height:236.9px;background:#000"></div>
<div class="a" style="left:629.3px;top:658.8px;width:726.1px;height:29.1px;background:linear-gradient(#2e2e2e 0,#2a2a2a 50%,#121212 53%,#1e1e1e 100%)"></div>
<div class="t m" style="left:857.20px;top:668.00px;font-size:13.7px;color:#f4f4f4;transform:scaleX(1.4522);">20%</div>
<div class="t m" style="left:963.65px;top:668.00px;font-size:13.7px;color:#f4f4f4;transform:scaleX(1.4522);">40%</div>
<div class="t m" style="left:1070.10px;top:668.00px;font-size:13.7px;color:#f4f4f4;transform:scaleX(1.4522);">60%</div>
<div class="t m" style="left:1176.55px;top:668.00px;font-size:13.7px;color:#f4f4f4;transform:scaleX(1.4522);">80%</div>
<div class="t m" style="left:1277.15px;top:668.00px;font-size:13.7px;color:#f4f4f4;transform:scaleX(1.4708);">100%</div>
<div class="a" style="left:629.3px;top:687.9px;width:726.1px;height:25px;background:#424242"></div>
<div class="t m" style="left:647.40px;top:693.35px;font-size:15.3px;color:#f4f4f4;font-weight:bold;transform:scaleX(1.4178);">x: CIE31</div>
<div class="t m" style="left:830.10px;top:693.35px;font-size:15.3px;color:#f0f0f0;transform:scaleX(1.4467);">0,3399</div>
<div class="t m" style="left:936.55px;top:693.35px;font-size:15.3px;color:#f0f0f0;transform:scaleX(1.4467);">0,3629</div>
<div class="t m" style="left:1043.00px;top:693.35px;font-size:15.3px;color:#f0f0f0;transform:scaleX(1.4467);">0,3832</div>
<div class="t m" style="left:1149.45px;top:693.35px;font-size:15.3px;color:#f0f0f0;transform:scaleX(1.4467);">0,4026</div>
<div class="t m" style="left:1255.90px;top:693.35px;font-size:15.3px;color:#f0f0f0;transform:scaleX(1.4467);">0,4222</div>
<div class="a" style="left:629.3px;top:712.8px;width:726.1px;height:25.96px;background:#808080"></div>
<div class="t m" style="left:647.40px;top:718.25px;font-size:15.3px;color:#f4f4f4;font-weight:bold;transform:scaleX(1.4228);">y: CIE31</div>
<div class="t m" style="left:830.10px;top:718.25px;font-size:15.3px;color:#f0f0f0;transform:scaleX(1.4467);">0,3602</div>
<div class="t m" style="left:936.55px;top:718.25px;font-size:15.3px;color:#f0f0f0;transform:scaleX(1.4467);">0,3947</div>
<div class="t m" style="left:1043.00px;top:718.25px;font-size:15.3px;color:#f0f0f0;transform:scaleX(1.4467);">0,4250</div>
<div class="t m" style="left:1149.45px;top:718.25px;font-size:15.3px;color:#f0f0f0;transform:scaleX(1.4467);">0,4541</div>
<div class="t m" style="left:1255.90px;top:718.25px;font-size:15.3px;color:#f0f0f0;transform:scaleX(1.4467);">0,4845</div>
<div class="a" style="left:629.3px;top:738.66px;width:726.1px;height:25.96px;background:#424242"></div>
<div class="t m" style="left:647.40px;top:744.11px;font-size:15.3px;color:#f4f4f4;font-weight:bold;transform:scaleX(1.2153);">Y</div>
<div class="t m" style="left:830.10px;top:744.11px;font-size:15.3px;color:#f0f0f0;transform:scaleX(1.4621);">318,1387</div>
<div class="t m" style="left:936.55px;top:744.11px;font-size:15.3px;color:#f0f0f0;transform:scaleX(1.4621);">316,6146</div>
<div class="t m" style="left:1043.00px;top:744.11px;font-size:15.3px;color:#f0f0f0;transform:scaleX(1.4621);">313,6959</div>
<div class="t m" style="left:1149.45px;top:744.11px;font-size:15.3px;color:#f0f0f0;transform:scaleX(1.4621);">309,9294</div>
<div class="t m" style="left:1255.90px;top:744.11px;font-size:15.3px;color:#f0f0f0;transform:scaleX(1.4621);">306,7771</div>
<div class="a" style="left:629.3px;top:764.52px;width:726.1px;height:25.96px;background:#808080"></div>
<div class="t m" style="left:647.40px;top:769.97px;font-size:15.3px;color:#f4f4f4;font-weight:bold;transform:scaleX(1.4766);">Target x:CIE31</div>
<div class="t m" style="left:830.10px;top:769.97px;font-size:15.3px;color:#f0f0f0;transform:scaleX(1.4467);">0,3344</div>
<div class="t m" style="left:936.55px;top:769.97px;font-size:15.3px;color:#f0f0f0;transform:scaleX(1.4467);">0,3564</div>
<div class="t m" style="left:1043.00px;top:769.97px;font-size:15.3px;color:#f0f0f0;transform:scaleX(1.4467);">0,3773</div>
<div class="t m" style="left:1149.45px;top:769.97px;font-size:15.3px;color:#f0f0f0;transform:scaleX(1.4467);">0,3969</div>
<div class="t m" style="left:1255.90px;top:769.97px;font-size:15.3px;color:#f0f0f0;transform:scaleX(1.4467);">0,4193</div>
<div class="a" style="left:629.3px;top:790.38px;width:726.1px;height:25.96px;background:#424242"></div>
<div class="t m" style="left:647.40px;top:795.83px;font-size:15.3px;color:#f4f4f4;font-weight:bold;transform:scaleX(1.4766);">Target y:CIE31</div>
<div class="t m" style="left:830.10px;top:795.83px;font-size:15.3px;color:#f0f0f0;transform:scaleX(1.4467);">0,3648</div>
<div class="t m" style="left:936.55px;top:795.83px;font-size:15.3px;color:#f0f0f0;transform:scaleX(1.4467);">0,4013</div>
<div class="t m" style="left:1043.00px;top:795.83px;font-size:15.3px;color:#f0f0f0;transform:scaleX(1.4467);">0,4358</div>
<div class="t m" style="left:1149.45px;top:795.83px;font-size:15.3px;color:#f0f0f0;transform:scaleX(1.4467);">0,4682</div>
<div class="t m" style="left:1255.90px;top:795.83px;font-size:15.3px;color:#f0f0f0;transform:scaleX(1.4467);">0,5053</div>
<div class="a" style="left:629.3px;top:816.24px;width:726.1px;height:25.96px;background:#808080"></div>
<div class="t m" style="left:647.40px;top:821.69px;font-size:15.3px;color:#f4f4f4;font-weight:bold;transform:scaleX(1.5118);">Target Y</div>
<div class="t m" style="left:830.10px;top:821.69px;font-size:15.3px;color:#f0f0f0;transform:scaleX(1.4621);">277,0548</div>
<div class="t m" style="left:936.55px;top:821.69px;font-size:15.3px;color:#f0f0f0;transform:scaleX(1.4621);">272,1917</div>
<div class="t m" style="left:1043.00px;top:821.69px;font-size:15.3px;color:#f0f0f0;transform:scaleX(1.4621);">268,4551</div>
<div class="t m" style="left:1149.45px;top:821.69px;font-size:15.3px;color:#f0f0f0;transform:scaleX(1.4621);">265,5226</div>
<div class="t m" style="left:1255.90px;top:821.69px;font-size:15.3px;color:#f0f0f0;transform:scaleX(1.4621);">262,6875</div>
<div class="a" style="left:629.3px;top:842.1px;width:726.1px;height:25.96px;background:#424242"></div>
<div class="t m" style="left:647.40px;top:847.55px;font-size:15.3px;color:#f4f4f4;font-weight:bold;transform:scaleX(1.5063);">ΔE 2000</div>
<div class="t m" style="left:830.10px;top:847.55px;font-size:15.3px;color:#f0f0f0;transform:scaleX(1.4467);">5,4792</div>
<div class="t m" style="left:936.55px;top:847.55px;font-size:15.3px;color:#f0f0f0;transform:scaleX(1.4467);">4,7610</div>
<div class="t m" style="left:1043.00px;top:847.55px;font-size:15.3px;color:#f0f0f0;transform:scaleX(1.4467);">4,7169</div>
<div class="t m" style="left:1149.45px;top:847.55px;font-size:15.3px;color:#f0f0f0;transform:scaleX(1.4467);">4,6083</div>
<div class="t m" style="left:1255.90px;top:847.55px;font-size:15.3px;color:#f0f0f0;transform:scaleX(1.4467);">4,4316</div>
<div class="a" style="left:629.3px;top:867.96px;width:726.1px;height:25.96px;background:#808080"></div>
<div class="t m" style="left:647.40px;top:873.41px;font-size:15.3px;color:#f4f4f4;font-weight:bold;transform:scaleX(1.4477);">ΔE ITP</div>
<div class="t m" style="left:830.10px;top:873.41px;font-size:15.3px;color:#f0f0f0;transform:scaleX(1.4491);">11,8361</div>
<div class="t m" style="left:936.55px;top:873.41px;font-size:15.3px;color:#f0f0f0;transform:scaleX(1.4196);">13,0601</div>
<div class="t m" style="left:1043.00px;top:873.41px;font-size:15.3px;color:#f0f0f0;transform:scaleX(1.4196);">13,8503</div>
<div class="t m" style="left:1149.45px;top:873.41px;font-size:15.3px;color:#f0f0f0;transform:scaleX(1.4196);">14,3447</div>
<div class="t m" style="left:1255.90px;top:873.41px;font-size:15.3px;color:#f0f0f0;transform:scaleX(1.4196);">16,6909</div>
<div class="a" style="left:974.6px;top:93px;width:688px;height:557.5px;background:#1e1e1e"></div>
<div class="a" style="left:981px;top:100px;width:681px;height:545px;background:#323232"></div>
<div class="a" style="left:1018.7px;top:123.9px;width:639.4px;height:491.7px;background:#252525"></div>
<div class="a" id="ciewrap" style="left:1019px;top:123px;width:639.1px;height:493px;overflow:hidden"><div class="a cg" style="left:0;top:0;width:700px;height:493px;clip-path:path('M273.8 479.9 L272.4 480.1 L273.0 480.2 L273.6 479.9 L273.3 480.2 L272.4 480.4 L272.1 480.3 L272.6 480.3 L273.0 479.9 L272.9 480.1 L272.4 480.6 L271.9 480.8 L271.5 480.8 L271.1 480.8 L270.8 480.7 L270.6 480.7 L270.2 480.7 L269.6 480.7 L269.1 480.5 L268.4 480.2 L267.6 479.8 L266.5 479.2 L265.3 478.4 L264.0 477.4 L262.6 476.3 L260.9 475.0 L259.0 473.5 L256.8 471.7 L254.3 469.7 L251.7 467.4 L248.8 464.9 L245.6 462.2 L242.1 459.3 L238.2 456.0 L233.8 452.4 L229.0 448.4 L223.8 444.2 L218.3 439.5 L212.2 434.3 L205.7 428.5 L198.7 422.0 L191.2 414.8 L183.1 406.4 L174.0 396.2 L163.6 383.9 L152.2 369.4 L140.1 353.2 L127.4 335.2 L114.2 315.3 L100.6 293.7 L87.0 271.0 L73.5 247.6 L60.6 223.8 L48.7 200.1 L38.3 177.1 L29.1 155.2 L21.3 134.7 L14.7 116.0 L9.6 99.3 L5.7 84.6 L3.0 71.7 L1.4 60.5 L0.7 50.7 L0.9 42.1 L2.0 34.5 L3.9 28.0 L6.7 22.8 L10.2 18.9 L14.4 16.0 L19.0 14.0 L24.1 12.5 L29.4 11.5 L35.1 10.9 L40.9 10.6 L46.9 10.4 L53.0 10.4 L59.1 10.5 L65.1 10.6 L71.3 10.8 L77.6 11.0 L84.1 11.3 L90.8 11.7 L97.7 12.2 L104.8 12.7 L112.1 13.3 L119.8 13.9 L127.7 14.7 L136.0 15.5 L144.5 16.4 L153.5 17.3 L162.8 18.4 L172.5 19.4 L182.6 20.6 L193.1 21.7 L204.0 23.0 L215.4 24.3 L227.2 25.6 L239.5 27.0 L252.2 28.5 L265.4 30.0 L279.0 31.6 L293.0 33.2 L307.4 34.9 L322.2 36.6 L337.2 38.3 L352.6 40.1 L368.1 41.9 L383.8 43.7 L399.2 45.5 L414.3 47.2 L429.2 48.9 L444.1 50.6 L458.8 52.3 L472.8 53.9 L486.2 55.5 L499.0 56.9 L511.3 58.4 L522.8 59.7 L533.7 60.9 L543.9 62.1 L553.4 63.2 L562.2 64.2 L570.5 65.2 L578.1 66.1 L585.3 66.9 L592.0 67.7 L598.4 68.4 L604.4 69.1 L610.1 69.7 L615.3 70.4 L620.2 70.9 L624.7 71.4 L628.9 71.9 L632.6 72.3 L635.9 72.7 L638.8 73.1 L641.5 73.4 L643.9 73.7 L646.1 73.9 L648.1 74.1 L649.8 74.3 L651.2 74.5 L652.4 74.6 L653.4 74.8 L654.5 74.9 L655.5 75.0 L656.3 75.1 L657.1 75.2 L657.9 75.3 L658.7 75.4 L659.5 75.5 L660.3 75.5 L661.0 75.6 L661.6 75.7 L662.0 75.7 L662.3 75.8 L662.5 75.8 L662.8 75.8 L662.9 75.9 L663.1 75.9 L663.8 77.7Z')">
<i style="left:24px;top:10px;width:74px;height:2px;background:linear-gradient(90deg,#0f0 0px,#0f0 74px)"></i>
<i style="left:16px;top:12px;width:107px;height:2px;background:linear-gradient(90deg,#0f0 0px,#0f0 107px)"></i>
<i style="left:12px;top:14px;width:131px;height:2px;background:linear-gradient(90deg,#0f0 0px,#04ff00 120px,#1dff00 131px)"></i>
<i style="left:9px;top:16px;width:153px;height:2px;background:linear-gradient(90deg,#0f0 0px,#03ff00 123px,#4dff00 153px)"></i>
<i style="left:7px;top:18px;width:173px;height:2px;background:linear-gradient(90deg,#00ff01 0px,#02ff00 125px,#7cff00 172px,#7fff00 173px)"></i>
<i style="left:5px;top:20px;width:193px;height:2px;background:linear-gradient(90deg,#00ff04 0px,#04ff00 128px,#7fff00 175px,#b7ff00 193px)"></i>
<i style="left:3px;top:22px;width:213px;height:2px;background:linear-gradient(90deg,#00ff08 0px,#0f0 107px,#03ff00 130px,#7cff00 176px,#f7ff00 213px)"></i>
<i style="left:2px;top:24px;width:231px;height:2px;background:linear-gradient(90deg,#00ff0b 0px,#0f0 115px,#03ff00 131px,#7bff00 177px,#fbff00 215px,#ffce00 231px)"></i>
<i style="left:1px;top:26px;width:249px;height:2px;background:linear-gradient(90deg,#00ff0e 0px,#02ff00 132px,#7bff00 178px,#fffe00 217px,#fb0 239px,#ffa500 249px)"></i>
<i style="left:1px;top:28px;width:267px;height:2px;background:linear-gradient(90deg,#00ff12 0px,#03ff00 133px,#7eff00 179px,#fffe00 217px,#fb0 239px,#ff8500 267px)"></i>
<i style="left:0px;top:30px;width:285px;height:2px;background:linear-gradient(90deg,#00ff15 0px,#03ff01 134px,#7bff00 179px,#fffd00 218px,#ffba00 240px,#ff7e00 272px,#ff6d00 285px)"></i>
<i style="left:0px;top:32px;width:302px;height:2px;background:linear-gradient(90deg,#00ff18 0px,#02ff05 134px,#7bff00 179px,#faff00 216px,#fd0 227px,#ff9d00 253px,#ff6400 292px,#ff5a00 302px)"></i>
<i style="left:0px;top:34px;width:320px;height:2px;background:linear-gradient(90deg,#00ff1c 0px,#04ff0a 135px,#7eff00 180px,#fffb00 218px,#ffb800 240px,#ff7d00 272px,#ff4a00 320px)"></i>
<i style="left:0px;top:36px;width:337px;height:2px;background:linear-gradient(90deg,#00ff1f 0px,#03ff0e 135px,#7eff05 180px,#fffe00 217px,#ffbc00 238px,#ff8000 269px,#ff4c00 316px,#ff3d00 337px)"></i>
<i style="left:0px;top:38px;width:354px;height:2px;background:linear-gradient(90deg,#0f2 0px,#02ff13 135px,#7aff0b 179px,#fffe02 217px,#ffbc00 238px,#ff8000 269px,#ff4c00 316px,#ff3200 354px)"></i>
<i style="left:0px;top:40px;width:372px;height:2px;background:linear-gradient(90deg,#00ff26 0px,#04ff17 136px,#7dff10 180px,#fffd08 217px,#ffbb02 238px,#ff7f00 269px,#ff4b00 316px,#ff2800 372px)"></i>
<i style="left:0px;top:42px;width:389px;height:2px;background:linear-gradient(90deg,#00ff29 0px,#03ff1c 136px,#7dff15 180px,#fffc0e 217px,#ffba06 238px,#ff7e00 269px,#ff4a00 316px,#ff2000 389px)"></i>
<i style="left:0px;top:44px;width:406px;height:2px;background:linear-gradient(90deg,#00ff2d 0px,#02ff21 136px,#7dff1a 180px,#fffb13 217px,#ffb90b 238px,#ff7d03 269px,#ff4a00 316px,#ff1d00 394px,#ff1900 406px)"></i>
<i style="left:0px;top:46px;width:424px;height:2px;background:linear-gradient(90deg,#00ff30 0px,#04ff25 137px,#7dff20 180px,#ffff1a 216px,#ffbb10 237px,#ff7f07 267px,#ff4b00 313px,#ff1f00 389px,#ff1200 424px)"></i>
<i style="left:0px;top:48px;width:441px;height:2px;background:linear-gradient(90deg,#00ff34 0px,#03ff2a 137px,#7dff25 180px,#fffe20 216px,#ffba15 237px,#ff7f0b 267px,#ff4b02 313px,#ff1e00 389px,#ff0d00 441px)"></i>
<i style="left:0px;top:50px;width:458px;height:2px;background:linear-gradient(90deg,#00ff37 0px,#02ff2f 137px,#7dff2b 180px,#fffd26 216px,#ffb919 237px,#ff7e0e 267px,#ff4a05 313px,#ff1e00 389px,#ff0800 458px)"></i>
<i style="left:0px;top:52px;width:476px;height:2px;background:linear-gradient(90deg,#00ff3b 0px,#04ff34 138px,#7dff30 180px,#fffc2c 216px,#ffb81e 237px,#ff7d12 267px,#ff4908 313px,#ff1d00 389px,#ff0300 476px)"></i>
<i style="left:0px;top:54px;width:493px;height:2px;background:linear-gradient(90deg,#00ff3e 0px,#03ff39 138px,#7dff36 180px,#fffc32 216px,#ffb723 237px,#ff7c16 267px,#ff490a 313px,#ff1d01 389px,#f00 493px)"></i>
<i style="left:0px;top:56px;width:511px;height:2px;background:linear-gradient(90deg,#00ff42 0px,#02ff3e 138px,#7cff3c 180px,#ffff39 215px,#ffbc29 235px,#ff801b 264px,#ff4b0e 309px,#ff1f03 383px,#f00 494px,#f00 511px)"></i>
<i style="left:0px;top:58px;width:528px;height:2px;background:linear-gradient(90deg,#00ff46 0px,#02ff43 138px,#7cff41 180px,#fffe40 215px,#ffbb2e 235px,#ff7f1e 264px,#ff4b11 309px,#ff1e05 383px,#f00 493px,#f00 528px)"></i>
<i style="left:0px;top:60px;width:545px;height:2px;background:linear-gradient(90deg,#00ff49 0px,#03ff48 139px,#7cff47 180px,#fffd46 215px,#ffba33 235px,#ff7f22 264px,#ff4a13 309px,#ff1d07 383px,#f00 491px,#f00 545px)"></i>
<i style="left:0px;top:62px;width:563px;height:2px;background:linear-gradient(90deg,#00ff4d 0px,#03ff4d 139px,#7cff4d 180px,#fffd4d 215px,#ffb938 235px,#ff7e26 264px,#ff4916 309px,#ff1d09 383px,#f00 490px,#f00 563px)"></i>
<i style="left:0px;top:64px;width:580px;height:2px;background:linear-gradient(90deg,#00ff51 0px,#02ff52 139px,#7cff53 180px,#fffc53 215px,#ffb83d 235px,#ff7d2a 264px,#ff4919 309px,#ff1c0b 383px,#ff0001 488px,#f00 580px)"></i>
<i style="left:0px;top:66px;width:597px;height:2px;background:linear-gradient(90deg,#0f5 0px,#04ff58 140px,#7cff59 180px,#faff5b 213px,#ffd24c 226px,#ff9336 251px,#ff5c23 288px,#ff2d13 347px,#ff0605 451px,#f00 533px,#f00 597px)"></i>
<i style="left:0px;top:68px;width:615px;height:2px;background:linear-gradient(90deg,#00ff58 0px,#03ff5d 140px,#7cff60 180px,#fffe62 214px,#ffbc4a 233px,#ff8034 261px,#ff4c20 304px,#ff1f10 374px,#ff0004 481px,#f00 615px)"></i>
<i style="left:0px;top:70px;width:632px;height:2px;background:linear-gradient(90deg,#00ff5c 0px,#02ff63 140px,#7bff66 180px,#fffe69 214px,#ffbb4f 233px,#ff7f38 261px,#ff4b23 304px,#ff1e12 375px,#ff0006 480px,#f00 632px)"></i>
<i style="left:1px;top:72px;width:638px;height:2px;background:linear-gradient(90deg,#00ff60 0px,#04ff68 140px,#7fff6c 180px,#fffd6f 213px,#ffba54 232px,#ff7e3c 260px,#ff4a26 303px,#ff1e14 374px,#ff0007 478px,#f00 638px)"></i>
<i style="left:1px;top:74px;width:638px;height:2px;background:linear-gradient(90deg,#00ff64 0px,#03ff6e 140px,#7bff73 179px,#fffc76 213px,#ffb95a 232px,#ff7e40 260px,#ff4929 303px,#ff1d16 374px,#ff0009 477px,#f00 638px)"></i>
<i style="left:1px;top:76px;width:638px;height:2px;background:linear-gradient(90deg,#00ff68 0px,#02ff74 140px,#7bff79 179px,#faff7f 211px,#ffdf70 220px,#ff9f54 242px,#ff673a 275px,#ff3624 327px,#ff0d11 416px,#ff0009 486px,#f00 638px)"></i>
<i style="left:2px;top:78px;width:637px;height:2px;background:linear-gradient(90deg,#00ff6c 0px,#04ff7a 140px,#7eff80 179px,#ffff86 211px,#ffba66 230px,#ff7f4a 257px,#ff4b30 299px,#ff1e1b 368px,#ff000c 470px,#ff0001 637px)"></i>
<i style="left:2px;top:80px;width:637px;height:2px;background:linear-gradient(90deg,#00ff70 0px,#03ff80 140px,#7bff86 178px,#fffe8d 211px,#ffba6b 230px,#ff7e4e 257px,#ff4a33 299px,#ff1d1d 368px,#ff000e 469px,#ff0001 637px)"></i>
<i style="left:3px;top:82px;width:636px;height:2px;background:linear-gradient(90deg,#00ff74 0px,#02ff86 139px,#7aff8d 177px,#fffd95 210px,#ffbb72 228px,#ff7f53 255px,#ff4b38 296px,#ff1e20 364px,#ff000f 465px,#ff0002 636px)"></i>
<i style="left:3px;top:84px;width:636px;height:2px;background:linear-gradient(90deg,#00ff78 0px,#04ff8c 140px,#7eff94 178px,#fffc9c 210px,#ffbb78 228px,#ff7e57 255px,#ff4a3b 296px,#ff1e22 364px,#f01 464px,#ff0003 636px)"></i>
<i style="left:4px;top:86px;width:635px;height:2px;background:linear-gradient(90deg,#00ff7d 0px,#03ff92 139px,#7eff9b 177px,#fffba3 209px,#ffba7e 227px,#ff7d5b 254px,#ff493e 295px,#ff1d24 363px,#ff0013 461px,#ff0004 635px)"></i>
<i style="left:4px;top:88px;width:635px;height:2px;background:linear-gradient(90deg,#00ff81 0px,#02ff98 139px,#7affa2 176px,#faffad 207px,#ffe9a1 213px,#ffa87a 233px,#ff6e57 263px,#ff3d3a 309px,#ff1321 387px,#ff0013 467px,#ff0005 635px)"></i>
<i style="left:5px;top:90px;width:634px;height:2px;background:linear-gradient(90deg,#00ff85 0px,#01ff9e 138px,#7affaa 175px,#fffeb5 207px,#ffbb8b 225px,#ff7f66 251px,#ff4b46 291px,#ff1e2a 357px,#ff0016 455px,#ff0006 634px)"></i>
<i style="left:5px;top:92px;width:634px;height:2px;background:linear-gradient(90deg,#00ff8a 0px,#03ffa5 139px,#7dffb1 176px,#fffdbd 207px,#ffba91 225px,#ff7e6b 251px,#ff4a49 291px,#ff1e2c 357px,#ff0018 454px,#ff0007 634px)"></i>
<i style="left:6px;top:94px;width:633px;height:2px;background:linear-gradient(90deg,#00ff8e 0px,#02ffac 138px,#7dffb9 175px,#fffcc5 206px,#ffb997 224px,#ff7d6f 250px,#ff494c 290px,#ff1d2f 356px,#ff001a 451px,#ff0008 633px)"></i>
<i style="left:6px;top:96px;width:633px;height:2px;background:linear-gradient(90deg,#00ff92 0px,#01ffb2 138px,#79ffc0 174px,#f9ffce 204px,#ffeec3 209px,#ffac95 228px,#ff726d 256px,#ff404a 299px,#ff152c 372px,#ff001b 455px,#ff0009 633px)"></i>
<i style="left:7px;top:98px;width:632px;height:2px;background:linear-gradient(90deg,#00ff97 0px,#03ffb9 138px,#7dffc8 174px,#ffffd8 204px,#ffbaa6 222px,#ff7f7b 247px,#ff4b55 286px,#ff1e35 350px,#ff001e 445px,#ff000a 632px)"></i>
<i style="left:7px;top:100px;width:632px;height:2px;background:linear-gradient(90deg,#00ff9b 0px,#03ffc0 138px,#7dffd0 174px,#fffee0 204px,#ffbcae 221px,#ff8081 246px,#ff4c5a 284px,#ff1f38 347px,#ff0020 442px,#ff000b 632px)"></i>
<i style="left:8px;top:102px;width:631px;height:2px;background:linear-gradient(90deg,#00ffa0 0px,#02ffc7 137px,#7dffd8 173px,#fffde8 203px,#ffbbb4 220px,#ff7f86 245px,#ff4b5d 283px,#ff1e3b 346px,#f02 440px,#ff000c 631px)"></i>
<i style="left:8px;top:104px;width:631px;height:2px;background:linear-gradient(90deg,#00ffa5 0px,#04ffce 138px,#7cffe0 173px,#fffdf1 203px,#ffbabb 220px,#ff7e8b 245px,#ff4a61 283px,#ff1e3d 346px,#ff0023 439px,#ff000d 631px)"></i>
<i style="left:9px;top:106px;width:630px;height:2px;background:linear-gradient(90deg,#00ffa9 0px,#00ffd4 134px,#0cffd6 140px,#84ffe9 174px,#fffcf9 202px,#ffb9c1 219px,#ff7d8f 244px,#ff4964 282px,#ff1d3f 345px,#ff0025 436px,#ff000e 630px)"></i>
<i style="left:10px;top:108px;width:627px;height:2px;background:linear-gradient(90deg,#00ffae 0px,#00ffd9 130px,#05ffdd 137px,#7cfff0 171px,#f4faff 199px,#fff1f9 203px,#ffafc0 221px,#ff758e 247px,#ff4262 288px,#ff173d 356px,#ff0026 438px,#ff000f 627px)"></i>
<i style="left:10px;top:110px;width:625px;height:2px;background:linear-gradient(90deg,#00ffb3 0px,#00ffdf 128px,#04ffe4 137px,#7cfff8 171px,#d8f5ff 194px,#ffebfd 204px,#ffabc4 222px,#ff7190 249px,#ff3e63 291px,#ff143d 361px,#ff0028 437px,#ff0010 625px)"></i>
<i style="left:11px;top:112px;width:622px;height:2px;background:linear-gradient(90deg,#00ffb8 0px,#00ffe5 124px,#03ffeb 136px,#8afaff 174px,#ffe2fd 205px,#ffa2c2 224px,#ff698f 252px,#ff3861 296px,#ff0f3b 371px,#ff002a 436px,#f01 622px)"></i>
<i style="left:12px;top:114px;width:619px;height:2px;background:linear-gradient(90deg,#00ffbd 0px,#00ffeb 121px,#02fff3 135px,#5efaff 162px,#ffd8fd 206px,#ff99c1 226px,#ff618c 256px,#ff315f 303px,#ff0939 385px,#ff002a 440px,#ff0012 619px)"></i>
<i style="left:12px;top:116px;width:617px;height:2px;background:linear-gradient(90deg,#00ffc2 0px,#00fff1 119px,#04fffb 136px,#dfd7ff 199px,#ffcffd 208px,#ff91c0 229px,#ff5b8b 260px,#ff2c5d 310px,#ff0536 398px,#ff001d 530px,#ff0014 617px)"></i>
<i style="left:13px;top:118px;width:614px;height:2px;background:linear-gradient(90deg,#00ffc7 0px,#00fff7 116px,#03fbff 135px,#dfcfff 200px,#ffc7fd 209px,#ff8bc1 230px,#ff568b 262px,#ff285d 314px,#ff0136 406px,#ff0017 592px,#ff0015 614px)"></i>
<i style="left:14px;top:120px;width:611px;height:2px;background:linear-gradient(90deg,#0fc 0px,#00fffd 113px,#02f4ff 134px,#dcc7ff 200px,#ffbffe 210px,#ff84c0 232px,#ff508a 265px,#ff245c 318px,#ff0036 410px,#ff0017 598px,#ff0016 611px)"></i>
<i style="left:14px;top:122px;width:609px;height:2px;background:linear-gradient(90deg,#00ffd1 0px,#00fbff 111px,#04ecff 135px,#ddbfff 202px,#ffb7fe 212px,#ff7fc1 234px,#ff4c8b 268px,#ff205c 323px,#ff0037 412px,#ff0018 599px,#ff0017 609px)"></i>
<i style="left:15px;top:124px;width:606px;height:2px;background:linear-gradient(90deg,#00ffd7 0px,#00fbff 98px,#03e6ff 134px,#deb8ff 203px,#ffacfa 214px,#ff76be 237px,#ff4689 272px,#ff1c5a 329px,#ff0039 413px,#ff0019 599px,#ff0018 606px)"></i>
<i style="left:16px;top:126px;width:604px;height:2px;background:linear-gradient(90deg,#00ffdc 0px,#00fbff 86px,#02dfff 133px,#dbb1ff 203px,#ffa5fa 215px,#ff70bd 239px,#ff4188 275px,#ff1859 334px,#ff003a 412px,#ff001a 595px,#ff001a 604px)"></i>
<i style="left:16px;top:128px;width:602px;height:2px;background:linear-gradient(90deg,#00ffe1 0px,#00fbff 74px,#04d8ff 134px,#dfa9ff 206px,#ff9ffa 217px,#ff6bbe 241px,#ff3d88 278px,#ff165a 338px,#ff003c 412px,#ff001c 592px,#ff001b 602px)"></i>
<i style="left:17px;top:130px;width:599px;height:2px;background:linear-gradient(90deg,#00ffe7 0px,#00faff 62px,#03d2ff 133px,#dda3ff 206px,#ff98fb 218px,#ff65bd 243px,#ff3987 281px,#ff1359 342px,#ff003e 410px,#ff001d 586px,#ff001c 599px)"></i>
<i style="left:18px;top:132px;width:596px;height:2px;background:linear-gradient(90deg,#00ffed 0px,#00fbff 49px,#02cdff 132px,#dd9dff 207px,#ff92fb 219px,#ff61be 244px,#ff3689 282px,#ff115a 344px,#ff0040 408px,#ff001f 580px,#ff001d 596px)"></i>
<i style="left:18px;top:134px;width:594px;height:2px;background:linear-gradient(90deg,#00fff2 0px,#00faff 39px,#04c7ff 133px,#de96ff 209px,#ff8cfb 221px,#ff5cbd 247px,#ff3288 286px,#ff0e5a 349px,#ff0042 407px,#ff0021 575px,#ff001f 594px)"></i>
<i style="left:19px;top:136px;width:591px;height:2px;background:linear-gradient(90deg,#00fff8 0px,#00f6ff 33px,#03c1ff 132px,#de90ff 210px,#ff86fb 222px,#ff58be 248px,#ff2f88 288px,#ff0c5a 352px,#f04 406px,#f02 572px,#ff0020 591px)"></i>
<i style="left:20px;top:138px;width:588px;height:2px;background:linear-gradient(90deg,#00fffe 0px,#02bcff 131px,#dc8bff 210px,#ff81fb 223px,#ff53bd 250px,#ff2b87 291px,#ff0959 357px,#ff0045 407px,#ff0023 572px,#ff0021 588px)"></i>
<i style="left:21px;top:140px;width:585px;height:2px;background:linear-gradient(90deg,#00faff 0px,#03b7ff 131px,#e085ff 212px,#ff7bfb 224px,#ff4fbe 251px,#ff2989 292px,#ff075a 359px,#ff0046 409px,#ff0024 575px,#f02 585px)"></i>
<i style="left:21px;top:142px;width:583px;height:2px;background:linear-gradient(90deg,#00f5ff 0px,#03b2ff 131px,#dd80ff 213px,#ff76fb 226px,#ff4bbd 254px,#ff2588 296px,#ff055a 364px,#ff003e 442px,#ff0024 583px)"></i>
<i style="left:22px;top:144px;width:580px;height:2px;background:linear-gradient(90deg,#00efff 0px,#02aeff 130px,#de7bff 214px,#ff71fb 227px,#ff47be 255px,#f28 298px,#ff035a 367px,#ff0034 490px,#ff0025 580px)"></i>
<i style="left:23px;top:146px;width:577px;height:2px;background:linear-gradient(90deg,#00eaff 0px,#03a9ff 130px,#de76ff 215px,#ff6cfb 228px,#ff43be 257px,#ff1f87 301px,#ff0159 372px,#f03 498px,#ff0026 577px)"></i>
<i style="left:24px;top:148px;width:574px;height:2px;background:linear-gradient(90deg,#00e4ff 0px,#03a4ff 129px,#df71ff 216px,#ff67fb 229px,#ff40be 258px,#ff1d89 302px,#ff005b 373px,#ff0034 499px,#ff0028 574px)"></i>
<i style="left:25px;top:150px;width:571px;height:2px;background:linear-gradient(90deg,#00dfff 0px,#02a0ff 128px,#dd6dff 216px,#ff63fb 230px,#ff3cbe 260px,#ff1a88 305px,#ff005a 377px,#ff0034 506px,#ff0029 571px)"></i>
<i style="left:25px;top:152px;width:569px;height:2px;background:linear-gradient(90deg,#00dbff 0px,#039cff 129px,#dd69ff 218px,#ff5ffc 232px,#ff39be 262px,#ff1888 308px,#ff005c 377px,#ff0036 504px,#ff002b 569px)"></i>
<i style="left:26px;top:154px;width:566px;height:2px;background:linear-gradient(90deg,#00d6ff 0px,#0298ff 128px,#de64ff 219px,#ff5afc 233px,#ff35be 264px,#ff1588 311px,#ff005f 375px,#ff0038 500px,#ff002c 566px)"></i>
<i style="left:27px;top:156px;width:563px;height:2px;background:linear-gradient(90deg,#00d1ff 0px,#0494ff 128px,#de60ff 220px,#ff56fc 234px,#ff33be 265px,#ff1389 312px,#ff0061 373px,#ff003a 495px,#ff002d 563px)"></i>
<i style="left:28px;top:158px;width:560px;height:2px;background:linear-gradient(90deg,#00cdff 0px,#0390ff 127px,#df5cff 221px,#ff52fc 235px,#ff2fbe 267px,#ff1088 315px,#ff0064 371px,#ff003c 491px,#ff002f 560px)"></i>
<i style="left:29px;top:160px;width:558px;height:2px;background:linear-gradient(90deg,#00c8ff 0px,#028dff 126px,#dd58ff 221px,#ff4efc 236px,#ff2cbf 268px,#ff0e88 317px,#ff0067 368px,#ff003e 485px,#ff0030 558px)"></i>
<i style="left:29px;top:162px;width:556px;height:2px;background:linear-gradient(90deg,#00c4ff 0px,#0489ff 127px,#e054ff 224px,#ff4bfc 238px,#ff29be 271px,#ff0c88 321px,#ff0069 368px,#ff0040 483px,#ff0032 556px)"></i>
<i style="left:30px;top:164px;width:553px;height:2px;background:linear-gradient(90deg,#00c0ff 0px,#0386ff 126px,#de51ff 224px,#ff47fc 239px,#ff27bf 272px,#ff0a89 322px,#ff006b 367px,#ff0042 481px,#f03 553px)"></i>
<i style="left:31px;top:166px;width:550px;height:2px;background:linear-gradient(90deg,#00bcff 0px,#0283ff 125px,#de4dff 225px,#ff43fc 240px,#ff24be 274px,#ff0888 325px,#ff006c 369px,#ff0042 484px,#ff0035 550px)"></i>
<i style="left:32px;top:168px;width:547px;height:2px;background:linear-gradient(90deg,#00b8ff 0px,#047fff 125px,#df49ff 226px,#ff40fc 241px,#ff21bf 275px,#ff0688 327px,#ff0069 378px,#ff0040 499px,#ff0036 547px)"></i>
<i style="left:33px;top:170px;width:544px;height:2px;background:linear-gradient(90deg,#00b4ff 0px,#037cff 124px,#df46ff 227px,#ff3dfc 242px,#ff1ebe 277px,#ff0488 330px,#ff005a 415px,#ff0038 544px)"></i>
<i style="left:34px;top:172px;width:541px;height:2px;background:linear-gradient(90deg,#00b0ff 0px,#0279ff 123px,#dd43ff 227px,#ff39fc 243px,#ff1cbf 278px,#ff0289 331px,#ff005a 417px,#ff0039 541px)"></i>
<i style="left:34px;top:174px;width:539px;height:2px;background:linear-gradient(90deg,#00adff 0px,#0476ff 124px,#e03fff 230px,#ff36fc 245px,#ff19be 281px,#f08 335px,#ff005a 423px,#ff003b 539px)"></i>
<i style="left:35px;top:176px;width:536px;height:2px;background:linear-gradient(90deg,#00a9ff 0px,#0373ff 123px,#de3dff 230px,#ff33fc 246px,#ff17bf 282px,#f08 337px,#ff005a 426px,#ff003c 536px)"></i>
<i style="left:36px;top:178px;width:533px;height:2px;background:linear-gradient(90deg,#00a6ff 0px,#0271ff 122px,#df3aff 231px,#ff30fc 247px,#ff15be 284px,#f08 340px,#ff005a 430px,#ff003e 533px)"></i>
<i style="left:37px;top:180px;width:530px;height:2px;background:linear-gradient(90deg,#00a2ff 0px,#046eff 122px,#df37ff 232px,#ff2cfa 249px,#ff12bc 287px,#ff008b 338px,#ff005c 427px,#ff003f 530px)"></i>
<i style="left:38px;top:182px;width:527px;height:2px;background:linear-gradient(90deg,#009fff 0px,#036bff 121px,#df34ff 233px,#ff2afa 250px,#ff10bd 288px,#ff008e 336px,#ff005f 423px,#ff0041 527px)"></i>
<i style="left:39px;top:184px;width:524px;height:2px;background:linear-gradient(90deg,#009cff 0px,#0468ff 121px,#e031ff 234px,#ff27fa 251px,#ff0ebe 289px,#ff0091 334px,#ff0062 419px,#ff0043 524px)"></i>
<i style="left:40px;top:186px;width:521px;height:2px;background:linear-gradient(90deg,#0098ff 0px,#0366ff 120px,#de2eff 234px,#ff24fa 252px,#ff0bbd 291px,#ff0094 332px,#ff0064 416px,#f04 521px)"></i>
<i style="left:41px;top:188px;width:518px;height:2px;background:linear-gradient(90deg,#0095ff 0px,#0364ff 119px,#df2cff 235px,#ff22fa 253px,#ff0abe 292px,#ff0097 331px,#f06 414px,#ff0046 518px)"></i>
<i style="left:42px;top:190px;width:515px;height:2px;background:linear-gradient(90deg,#0092ff 0px,#0461ff 119px,#df29ff 236px,#ff1ffb 254px,#ff08bd 294px,#ff0098 332px,#ff0067 415px,#ff0048 515px)"></i>
<i style="left:42px;top:192px;width:514px;height:2px;background:linear-gradient(90deg,#0090ff 0px,#035fff 119px,#df26ff 238px,#ff1dfb 256px,#ff06be 296px,#ff0092 342px,#ff0063 431px,#ff0049 514px)"></i>
<i style="left:43px;top:194px;width:511px;height:2px;background:linear-gradient(90deg,#008dff 0px,#035dff 118px,#de24ff 238px,#ff1afb 257px,#ff04bd 298px,#ff0087 360px,#ff0059 461px,#ff004b 511px)"></i>
<i style="left:44px;top:196px;width:508px;height:2px;background:linear-gradient(90deg,#008aff 0px,#045aff 118px,#e021ff 240px,#ff18fb 258px,#ff02be 299px,#ff0087 362px,#ff0059 464px,#ff004d 508px)"></i>
<i style="left:45px;top:198px;width:505px;height:2px;background:linear-gradient(90deg,#0087ff 0px,#0358ff 117px,#de1fff 240px,#ff16fb 259px,#ff00bd 301px,#ff0087 365px,#ff0059 468px,#ff004f 505px)"></i>
<i style="left:46px;top:200px;width:502px;height:2px;background:linear-gradient(90deg,#0084ff 0px,#0356ff 116px,#df1dff 241px,#ff13fb 260px,#ff00be 302px,#f08 366px,#ff005a 470px,#ff0050 502px)"></i>
<i style="left:47px;top:202px;width:499px;height:2px;background:linear-gradient(90deg,#0082ff 0px,#0454ff 116px,#df1bff 242px,#ff11fb 261px,#ff00bd 304px,#ff0087 369px,#ff0059 474px,#ff0052 499px)"></i>
<i style="left:48px;top:204px;width:496px;height:2px;background:linear-gradient(90deg,#007fff 0px,#0352ff 115px,#e019ff 243px,#ff0ffb 262px,#ff00c0 303px,#ff008a 367px,#ff005b 471px,#ff0054 496px)"></i>
<i style="left:49px;top:206px;width:493px;height:2px;background:linear-gradient(90deg,#007cff 0px,#0350ff 114px,#de17ff 243px,#ff0dfb 263px,#ff00c4 301px,#ff008d 364px,#ff005f 465px,#ff0056 493px)"></i>
<i style="left:50px;top:208px;width:490px;height:2px;background:linear-gradient(90deg,#007aff 0px,#044eff 114px,#e014ff 245px,#ff0bfb 264px,#ff00c8 299px,#ff0091 361px,#ff0061 460px,#ff0058 490px)"></i>
<i style="left:51px;top:210px;width:487px;height:2px;background:linear-gradient(90deg,#07f 0px,#034cff 113px,#df12ff 245px,#ff09fb 265px,#ff00ca 299px,#ff0092 361px,#ff0062 460px,#ff005a 487px)"></i>
<i style="left:52px;top:212px;width:484px;height:2px;background:linear-gradient(90deg,#0075ff 0px,#034aff 112px,#df10ff 246px,#ff07fb 266px,#ff00c9 301px,#ff0092 364px,#ff0062 465px,#ff005c 484px)"></i>
<i style="left:53px;top:214px;width:481px;height:2px;background:linear-gradient(90deg,#0073ff 0px,#0448ff 112px,#df0eff 247px,#ff05fb 267px,#ff00bd 313px,#ff0087 383px,#ff005e 481px)"></i>
<i style="left:54px;top:216px;width:478px;height:2px;background:linear-gradient(90deg,#0070ff 0px,#0347ff 111px,#de0dff 247px,#ff03fb 268px,#ff00be 314px,#f08 384px,#ff0060 478px)"></i>
<i style="left:55px;top:218px;width:475px;height:2px;background:linear-gradient(90deg,#006eff 0px,#0445ff 111px,#e00aff 249px,#ff01fb 269px,#ff00bd 316px,#f08 387px,#ff0062 475px)"></i>
<i style="left:56px;top:220px;width:472px;height:2px;background:linear-gradient(90deg,#006cff 0px,#0443ff 110px,#df09ff 249px,#ff00fb 270px,#ff00be 317px,#f08 388px,#ff0064 472px)"></i>
<i style="left:57px;top:222px;width:469px;height:2px;background:linear-gradient(90deg,#0069ff 0px,#0342ff 109px,#df07ff 250px,#ff00fb 271px,#ff00bd 319px,#f08 391px,#f06 469px)"></i>
<i style="left:58px;top:224px;width:466px;height:2px;background:linear-gradient(90deg,#0067ff 0px,#0440ff 109px,#df05ff 251px,#ff00fb 272px,#ff00be 320px,#f08 393px,#ff0068 466px)"></i>
<i style="left:59px;top:226px;width:464px;height:2px;background:linear-gradient(90deg,#0065ff 0px,#043eff 108px,#e003ff 252px,#ff00fc 273px,#ff00be 322px,#f08 396px,#ff006a 464px)"></i>
<i style="left:60px;top:228px;width:461px;height:2px;background:linear-gradient(90deg,#0063ff 0px,#033dff 107px,#de02ff 252px,#ff00fc 274px,#ff00be 323px,#f08 397px,#ff006c 461px)"></i>
<i style="left:61px;top:230px;width:458px;height:2px;background:linear-gradient(90deg,#0061ff 0px,#043bff 107px,#e000ff 254px,#ff00fc 275px,#ff00be 325px,#f08 400px,#ff006e 458px)"></i>
<i style="left:62px;top:232px;width:455px;height:2px;background:linear-gradient(90deg,#005fff 0px,#033aff 106px,#df00ff 254px,#ff00fc 276px,#ff00be 326px,#f08 402px,#ff0070 455px)"></i>
<i style="left:64px;top:234px;width:451px;height:2px;background:linear-gradient(90deg,#005dff 0px,#0338ff 104px,#df00ff 254px,#ff00fc 276px,#ff00be 327px,#f08 404px,#ff0072 451px)"></i>
<i style="left:65px;top:236px;width:448px;height:2px;background:linear-gradient(90deg,#005bff 0px,#0437ff 104px,#e000ff 255px,#ff00fc 277px,#ff00be 328px,#f08 405px,#ff0075 448px)"></i>
<i style="left:66px;top:238px;width:445px;height:2px;background:linear-gradient(90deg,#0059ff 0px,#0335ff 103px,#da00ff 252px,#ff00fc 278px,#ff00be 330px,#f08 408px,#f07 445px)"></i>
<i style="left:67px;top:240px;width:442px;height:2px;background:linear-gradient(90deg,#0057ff 0px,#0334ff 102px,#d400ff 249px,#ff00fc 279px,#ff00be 331px,#f08 410px,#ff0079 442px)"></i>
<i style="left:68px;top:242px;width:439px;height:2px;background:linear-gradient(90deg,#05f 0px,#0433ff 102px,#ce00ff 246px,#ff00fc 280px,#ff00be 333px,#f08 413px,#ff007c 439px)"></i>
<i style="left:69px;top:244px;width:436px;height:2px;background:linear-gradient(90deg,#0053ff 0px,#0331ff 101px,#c900ff 243px,#ff00fc 281px,#ff00be 334px,#f08 414px,#ff007e 436px)"></i>
<i style="left:70px;top:246px;width:433px;height:2px;background:linear-gradient(90deg,#0052ff 0px,#0330ff 100px,#c500ff 241px,#ff00fc 282px,#ff00be 336px,#f08 417px,#ff0080 433px)"></i>
<i style="left:71px;top:248px;width:430px;height:2px;background:linear-gradient(90deg,#0050ff 0px,#042fff 100px,#c000ff 238px,#ff00fc 283px,#ff00be 337px,#f08 419px,#ff0083 430px)"></i>
<i style="left:72px;top:250px;width:427px;height:2px;background:linear-gradient(90deg,#004eff 0px,#032dff 99px,#ba00ff 235px,#ff00fc 284px,#ff00be 339px,#f08 422px,#ff0085 427px)"></i>
<i style="left:74px;top:252px;width:423px;height:2px;background:linear-gradient(90deg,#004cff 0px,#042cff 98px,#b500ff 231px,#ff00fc 284px,#ff00be 339px,#f08 422px,#f08 423px)"></i>
<i style="left:75px;top:254px;width:420px;height:2px;background:linear-gradient(90deg,#004bff 0px,#042bff 97px,#b000ff 228px,#ff00fc 285px,#ff00be 341px,#ff008a 420px)"></i>
<i style="left:76px;top:256px;width:417px;height:2px;background:linear-gradient(90deg,#0049ff 0px,#032aff 96px,#ad00ff 226px,#ff00fc 286px,#ff00be 342px,#ff008d 417px)"></i>
<i style="left:77px;top:258px;width:415px;height:2px;background:linear-gradient(90deg,#0047ff 0px,#0428ff 96px,#a800ff 223px,#ff00fc 287px,#ff00be 344px,#ff008f 415px)"></i>
<i style="left:78px;top:260px;width:412px;height:2px;background:linear-gradient(90deg,#0046ff 0px,#0427ff 95px,#a300ff 220px,#ff00fc 288px,#ff00be 345px,#ff0092 412px)"></i>
<i style="left:79px;top:262px;width:409px;height:2px;background:linear-gradient(90deg,#04f 0px,#0326ff 94px,#9f00ff 217px,#ff00fc 289px,#ff00be 347px,#ff0095 409px)"></i>
<i style="left:80px;top:264px;width:406px;height:2px;background:linear-gradient(90deg,#0043ff 0px,#0425ff 94px,#9a00ff 214px,#ff00fb 291px,#ff00be 349px,#ff0097 406px)"></i>
<i style="left:82px;top:266px;width:402px;height:2px;background:linear-gradient(90deg,#0041ff 0px,#0424ff 92px,#9700ff 211px,#ff00fb 291px,#ff00bd 350px,#ff009a 402px)"></i>
<i style="left:83px;top:268px;width:399px;height:2px;background:linear-gradient(90deg,#003fff 0px,#0323ff 91px,#9300ff 208px,#ff00fb 292px,#ff00be 351px,#ff009d 399px)"></i>
<i style="left:84px;top:270px;width:396px;height:2px;background:linear-gradient(90deg,#003eff 0px,#0422ff 91px,#8f00ff 205px,#ff00fb 293px,#ff00bd 353px,#ff00a0 396px)"></i>
<i style="left:85px;top:272px;width:393px;height:2px;background:linear-gradient(90deg,#003dff 0px,#0421ff 90px,#8b00ff 202px,#ff00fb 294px,#ff00be 354px,#ff00a3 393px)"></i>
<i style="left:86px;top:274px;width:390px;height:2px;background:linear-gradient(90deg,#003bff 0px,#0320ff 89px,#8600ff 199px,#ff00fb 295px,#ff00bd 356px,#ff00a6 390px)"></i>
<i style="left:87px;top:276px;width:387px;height:2px;background:linear-gradient(90deg,#003aff 0px,#041fff 89px,#8400ff 197px,#ff00fb 296px,#ff00be 357px,#ff00a9 387px)"></i>
<i style="left:89px;top:278px;width:383px;height:2px;background:linear-gradient(90deg,#0038ff 0px,#031eff 87px,#8000ff 193px,#ff00fb 296px,#ff00bd 358px,#ff00ac 383px)"></i>
<i style="left:90px;top:280px;width:380px;height:2px;background:linear-gradient(90deg,#0037ff 0px,#041dff 87px,#7c00ff 190px,#ff00fb 297px,#ff00be 359px,#ff00af 380px)"></i>
<i style="left:91px;top:282px;width:377px;height:2px;background:linear-gradient(90deg,#0035ff 0px,#041cff 86px,#7800ff 187px,#ff00fb 298px,#ff00bd 361px,#ff00b2 377px)"></i>
<i style="left:92px;top:284px;width:374px;height:2px;background:linear-gradient(90deg,#0034ff 0px,#031bff 85px,#7500ff 185px,#ff00fb 299px,#ff00be 362px,#ff00b5 374px)"></i>
<i style="left:93px;top:286px;width:371px;height:2px;background:linear-gradient(90deg,#03f 0px,#041aff 85px,#7200ff 182px,#ff00fb 300px,#ff00bd 364px,#ff00b8 371px)"></i>
<i style="left:95px;top:288px;width:367px;height:2px;background:linear-gradient(90deg,#0031ff 0px,#0419ff 83px,#6e00ff 178px,#ff00fb 300px,#ff00be 364px,#ff00bc 367px)"></i>
<i style="left:96px;top:290px;width:365px;height:2px;background:linear-gradient(90deg,#0030ff 0px,#0318ff 82px,#6b00ff 175px,#ff00fb 301px,#ff00be 365px)"></i>
<i style="left:97px;top:292px;width:362px;height:2px;background:linear-gradient(90deg,#002fff 0px,#0417ff 82px,#6800ff 173px,#ff00fb 302px,#ff00c2 362px)"></i>
<i style="left:98px;top:294px;width:359px;height:2px;background:linear-gradient(90deg,#002eff 0px,#0416ff 81px,#6500ff 170px,#ff00fb 303px,#ff00c5 359px)"></i>
<i style="left:100px;top:296px;width:355px;height:2px;background:linear-gradient(90deg,#002cff 0px,#0316ff 79px,#6100ff 166px,#ff00fb 303px,#ff00c8 355px)"></i>
<i style="left:101px;top:298px;width:352px;height:2px;background:linear-gradient(90deg,#002bff 0px,#0415ff 79px,#5f00ff 164px,#ff00fb 304px,#f0c 352px)"></i>
<i style="left:102px;top:300px;width:349px;height:2px;background:linear-gradient(90deg,#002aff 0px,#0414ff 78px,#5c00ff 161px,#ff00fc 305px,#ff00d0 349px)"></i>
<i style="left:103px;top:302px;width:346px;height:2px;background:linear-gradient(90deg,#0029ff 0px,#0313ff 77px,#5900ff 158px,#ff00fc 306px,#ff00d3 346px)"></i>
<i style="left:105px;top:304px;width:342px;height:2px;background:linear-gradient(90deg,#0027ff 0px,#0412ff 76px,#5700ff 155px,#ff00fc 306px,#ff00d7 342px)"></i>
<i style="left:106px;top:306px;width:339px;height:2px;background:linear-gradient(90deg,#0026ff 0px,#0411ff 75px,#5400ff 152px,#ff00fc 307px,#ff00db 339px)"></i>
<i style="left:107px;top:308px;width:336px;height:2px;background:linear-gradient(90deg,#0025ff 0px,#0410ff 75px,#5200ff 150px,#ff00fc 308px,#ff00df 336px)"></i>
<i style="left:108px;top:310px;width:333px;height:2px;background:linear-gradient(90deg,#0024ff 0px,#0410ff 74px,#4e00ff 147px,#ff00fc 309px,#ff00e3 333px)"></i>
<i style="left:110px;top:312px;width:329px;height:2px;background:linear-gradient(90deg,#0023ff 0px,#040fff 72px,#4d00ff 144px,#ff00fc 309px,#ff00e7 329px)"></i>
<i style="left:111px;top:314px;width:326px;height:2px;background:linear-gradient(90deg,#02f 0px,#040eff 72px,#4a00ff 141px,#ff00fc 310px,#ff00eb 326px)"></i>
<i style="left:112px;top:316px;width:323px;height:2px;background:linear-gradient(90deg,#0021ff 0px,#040dff 71px,#4800ff 139px,#ff00fc 311px,#ff00ef 323px)"></i>
<i style="left:113px;top:318px;width:320px;height:2px;background:linear-gradient(90deg,#0020ff 0px,#030dff 70px,#4500ff 136px,#ff00fc 312px,#ff00f3 320px)"></i>
<i style="left:115px;top:320px;width:316px;height:2px;background:linear-gradient(90deg,#001eff 0px,#040cff 69px,#4300ff 133px,#ff00fc 312px,#ff00f7 316px)"></i>
<i style="left:116px;top:322px;width:313px;height:2px;background:linear-gradient(90deg,#001dff 0px,#040bff 68px,#4100ff 131px,#ff00fc 313px)"></i>
<i style="left:117px;top:324px;width:311px;height:2px;background:linear-gradient(90deg,#001cff 0px,#030bff 67px,#3f00ff 129px,#f0f 311px)"></i>
<i style="left:119px;top:326px;width:307px;height:2px;background:linear-gradient(90deg,#001bff 0px,#040aff 66px,#3f00ff 127px,#fa00ff 307px)"></i>
<i style="left:120px;top:328px;width:304px;height:2px;background:linear-gradient(90deg,#001aff 0px,#0409ff 65px,#3d00ff 125px,#f600ff 304px)"></i>
<i style="left:121px;top:330px;width:301px;height:2px;background:linear-gradient(90deg,#0019ff 0px,#0309ff 64px,#3c00ff 124px,#f200ff 301px)"></i>
<i style="left:123px;top:332px;width:297px;height:2px;background:linear-gradient(90deg,#0018ff 0px,#0408ff 63px,#3d00ff 123px,#ed00ff 297px)"></i>
<i style="left:124px;top:334px;width:294px;height:2px;background:linear-gradient(90deg,#0017ff 0px,#0407ff 62px,#3e00ff 124px,#e900ff 294px)"></i>
<i style="left:125px;top:336px;width:291px;height:2px;background:linear-gradient(90deg,#0016ff 0px,#0406ff 62px,#4200ff 128px,#e500ff 291px)"></i>
<i style="left:127px;top:338px;width:287px;height:2px;background:linear-gradient(90deg,#0015ff 0px,#0406ff 60px,#4700ff 132px,#e100ff 287px)"></i>
<i style="left:128px;top:340px;width:284px;height:2px;background:linear-gradient(90deg,#0014ff 0px,#0405ff 59px,#5200ff 144px,#d0f 284px)"></i>
<i style="left:130px;top:342px;width:280px;height:2px;background:linear-gradient(90deg,#0013ff 0px,#0405ff 58px,#9b00ff 218px,#d900ff 280px)"></i>
<i style="left:131px;top:344px;width:277px;height:2px;background:linear-gradient(90deg,#0012ff 0px,#0404ff 57px,#d500ff 277px)"></i>
<i style="left:132px;top:346px;width:274px;height:2px;background:linear-gradient(90deg,#01f 0px,#0403ff 56px,#d200ff 274px)"></i>
<i style="left:134px;top:348px;width:270px;height:2px;background:linear-gradient(90deg,#0010ff 0px,#0403ff 55px,#ce00ff 270px)"></i>
<i style="left:135px;top:350px;width:267px;height:2px;background:linear-gradient(90deg,#0010ff 0px,#0402ff 54px,#ca00ff 267px)"></i>
<i style="left:137px;top:352px;width:263px;height:2px;background:linear-gradient(90deg,#000eff 0px,#0401ff 53px,#c700ff 263px)"></i>
<i style="left:138px;top:354px;width:260px;height:2px;background:linear-gradient(90deg,#000eff 0px,#0401ff 52px,#c300ff 260px)"></i>
<i style="left:140px;top:356px;width:257px;height:2px;background:linear-gradient(90deg,#000dff 0px,#0400ff 50px,#c000ff 257px)"></i>
<i style="left:141px;top:358px;width:254px;height:2px;background:linear-gradient(90deg,#000cff 0px,#0400ff 50px,#bd00ff 254px)"></i>
<i style="left:143px;top:360px;width:250px;height:2px;background:linear-gradient(90deg,#000bff 0px,#0400ff 48px,#ba00ff 250px)"></i>
<i style="left:144px;top:362px;width:247px;height:2px;background:linear-gradient(90deg,#000aff 0px,#0400ff 47px,#b600ff 247px)"></i>
<i style="left:146px;top:364px;width:243px;height:2px;background:linear-gradient(90deg,#0009ff 0px,#0400ff 46px,#b300ff 243px)"></i>
<i style="left:147px;top:366px;width:240px;height:2px;background:linear-gradient(90deg,#0008ff 0px,#0400ff 45px,#b000ff 240px)"></i>
<i style="left:149px;top:368px;width:236px;height:2px;background:linear-gradient(90deg,#0007ff 0px,#0500ff 44px,#ac00ff 236px)"></i>
<i style="left:150px;top:370px;width:233px;height:2px;background:linear-gradient(90deg,#0007ff 0px,#0400ff 43px,#a900ff 233px)"></i>
<i style="left:152px;top:372px;width:229px;height:2px;background:linear-gradient(90deg,#0006ff 0px,#0400ff 41px,#a600ff 229px)"></i>
<i style="left:153px;top:374px;width:226px;height:2px;background:linear-gradient(90deg,#0005ff 0px,#0500ff 41px,#a300ff 226px)"></i>
<i style="left:155px;top:376px;width:222px;height:2px;background:linear-gradient(90deg,#0004ff 0px,#0400ff 39px,#a000ff 222px)"></i>
<i style="left:156px;top:378px;width:219px;height:2px;background:linear-gradient(90deg,#0003ff 0px,#0400ff 38px,#9d00ff 219px)"></i>
<i style="left:158px;top:380px;width:215px;height:2px;background:linear-gradient(90deg,#0002ff 0px,#0400ff 37px,#9a00ff 215px)"></i>
<i style="left:160px;top:382px;width:211px;height:2px;background:linear-gradient(90deg,#0001ff 0px,#0400ff 35px,#9700ff 211px)"></i>
<i style="left:161px;top:384px;width:208px;height:2px;background:linear-gradient(90deg,#0001ff 0px,#0500ff 35px,#9400ff 208px)"></i>
<i style="left:163px;top:386px;width:204px;height:2px;background:linear-gradient(90deg,#00f 0px,#0400ff 33px,#9100ff 204px)"></i>
<i style="left:165px;top:388px;width:200px;height:2px;background:linear-gradient(90deg,#00f 0px,#0500ff 32px,#8e00ff 200px)"></i>
<i style="left:166px;top:390px;width:198px;height:2px;background:linear-gradient(90deg,#00f 0px,#0500ff 31px,#8c00ff 198px)"></i>
<i style="left:168px;top:392px;width:194px;height:2px;background:linear-gradient(90deg,#00f 0px,#0500ff 30px,#8900ff 194px)"></i>
<i style="left:170px;top:394px;width:190px;height:2px;background:linear-gradient(90deg,#00f 0px,#0500ff 28px,#8700ff 190px)"></i>
<i style="left:171px;top:396px;width:187px;height:2px;background:linear-gradient(90deg,#00f 0px,#0500ff 28px,#8400ff 187px)"></i>
<i style="left:173px;top:398px;width:183px;height:2px;background:linear-gradient(90deg,#00f 0px,#0500ff 26px,#8100ff 183px)"></i>
<i style="left:175px;top:400px;width:179px;height:2px;background:linear-gradient(90deg,#00f 0px,#0600ff 25px,#7f00ff 179px)"></i>
<i style="left:177px;top:402px;width:175px;height:2px;background:linear-gradient(90deg,#00f 0px,#0600ff 24px,#7c00ff 175px)"></i>
<i style="left:178px;top:404px;width:172px;height:2px;background:linear-gradient(90deg,#00f 0px,#0600ff 23px,#7a00ff 172px)"></i>
<i style="left:180px;top:406px;width:168px;height:2px;background:linear-gradient(90deg,#00f 0px,#0700ff 23px,#70f 168px)"></i>
<i style="left:182px;top:408px;width:164px;height:2px;background:linear-gradient(90deg,#00f 0px,#0700ff 21px,#7400ff 164px)"></i>
<i style="left:184px;top:410px;width:160px;height:2px;background:linear-gradient(90deg,#00f 0px,#0900ff 22px,#7200ff 160px)"></i>
<i style="left:186px;top:412px;width:156px;height:2px;background:linear-gradient(90deg,#00f 0px,#0b00ff 24px,#7000ff 156px)"></i>
<i style="left:188px;top:414px;width:152px;height:2px;background:linear-gradient(90deg,#00f 0px,#1300ff 33px,#6d00ff 152px)"></i>
<i style="left:190px;top:416px;width:148px;height:2px;background:linear-gradient(90deg,#00f 0px,#6b00ff 148px)"></i>
<i style="left:192px;top:418px;width:144px;height:2px;background:linear-gradient(90deg,#00f 0px,#6800ff 144px)"></i>
<i style="left:194px;top:420px;width:140px;height:2px;background:linear-gradient(90deg,#00f 0px,#60f 140px)"></i>
<i style="left:196px;top:422px;width:137px;height:2px;background:linear-gradient(90deg,#00f 0px,#6500ff 137px)"></i>
<i style="left:198px;top:424px;width:133px;height:2px;background:linear-gradient(90deg,#0100ff 0px,#6200ff 133px)"></i>
<i style="left:200px;top:426px;width:129px;height:2px;background:linear-gradient(90deg,#0200ff 0px,#6000ff 129px)"></i>
<i style="left:203px;top:428px;width:124px;height:2px;background:linear-gradient(90deg,#0400ff 0px,#5e00ff 124px)"></i>
<i style="left:205px;top:430px;width:120px;height:2px;background:linear-gradient(90deg,#0500ff 0px,#5c00ff 120px)"></i>
<i style="left:207px;top:432px;width:116px;height:2px;background:linear-gradient(90deg,#0600ff 0px,#5900ff 116px)"></i>
<i style="left:209px;top:434px;width:112px;height:2px;background:linear-gradient(90deg,#0800ff 0px,#5700ff 112px)"></i>
<i style="left:212px;top:436px;width:107px;height:2px;background:linear-gradient(90deg,#0900ff 0px,#50f 107px)"></i>
<i style="left:214px;top:438px;width:103px;height:2px;background:linear-gradient(90deg,#0a00ff 0px,#5300ff 103px)"></i>
<i style="left:216px;top:440px;width:99px;height:2px;background:linear-gradient(90deg,#0c00ff 0px,#5100ff 99px)"></i>
<i style="left:219px;top:442px;width:94px;height:2px;background:linear-gradient(90deg,#0d00ff 0px,#4f00ff 94px)"></i>
<i style="left:221px;top:444px;width:90px;height:2px;background:linear-gradient(90deg,#0e00ff 0px,#4d00ff 90px)"></i>
<i style="left:224px;top:446px;width:85px;height:2px;background:linear-gradient(90deg,#1000ff 0px,#4b00ff 85px)"></i>
<i style="left:226px;top:448px;width:81px;height:2px;background:linear-gradient(90deg,#10f 0px,#4900ff 81px)"></i>
<i style="left:228px;top:450px;width:77px;height:2px;background:linear-gradient(90deg,#1200ff 0px,#4700ff 77px)"></i>
<i style="left:231px;top:452px;width:72px;height:2px;background:linear-gradient(90deg,#1400ff 0px,#4500ff 72px)"></i>
<i style="left:233px;top:454px;width:68px;height:2px;background:linear-gradient(90deg,#1500ff 0px,#4300ff 68px)"></i>
<i style="left:236px;top:456px;width:64px;height:2px;background:linear-gradient(90deg,#1700ff 0px,#4200ff 64px)"></i>
<i style="left:238px;top:458px;width:60px;height:2px;background:linear-gradient(90deg,#1800ff 0px,#4000ff 60px)"></i>
<i style="left:240px;top:460px;width:56px;height:2px;background:linear-gradient(90deg,#1900ff 0px,#3e00ff 56px)"></i>
<i style="left:243px;top:462px;width:51px;height:2px;background:linear-gradient(90deg,#1a00ff 0px,#3c00ff 51px)"></i>
<i style="left:245px;top:464px;width:47px;height:2px;background:linear-gradient(90deg,#1b00ff 0px,#3a00ff 47px)"></i>
<i style="left:248px;top:466px;width:42px;height:2px;background:linear-gradient(90deg,#1d00ff 0px,#3800ff 42px)"></i>
<i style="left:250px;top:468px;width:38px;height:2px;background:linear-gradient(90deg,#1e00ff 0px,#3700ff 38px)"></i>
<i style="left:252px;top:470px;width:34px;height:2px;background:linear-gradient(90deg,#1f00ff 0px,#3500ff 34px)"></i>
<i style="left:255px;top:472px;width:29px;height:2px;background:linear-gradient(90deg,#2000ff 0px,#30f 29px)"></i>
<i style="left:257px;top:474px;width:25px;height:2px;background:linear-gradient(90deg,#2100ff 0px,#3100ff 25px)"></i>
<i style="left:260px;top:476px;width:20px;height:2px;background:linear-gradient(90deg,#2300ff 0px,#3000ff 20px)"></i>
<i style="left:262px;top:478px;width:16px;height:2px;background:linear-gradient(90deg,#2400ff 0px,#2e00ff 16px)"></i>
<i style="left:265px;top:480px;width:11px;height:2px;background:linear-gradient(90deg,#2500ff 0px,#2c00ff 11px)"></i><svg width="700" height="493" viewBox="0 0 700 493" style="filter:blur(.6px)"><path d="M-20 -20H720V520H-20Z M479.3 62.9L132.8 30.4L186.4 362.5Z" fill="#000" fill-opacity=".375" fill-rule="evenodd"/></svg>
</div></div>
<svg width="1662" height="1010" viewBox="0 0 1662 1010"><path d="M1018.7,123.9H1658.1V615.6" stroke="#8e8e8e" stroke-width="1.5" fill="none"/>
<path d="M1018.7,123.9V615.6H1658.1" stroke="#adadad" stroke-width="1.35" fill="none"/>
<path d="M1018.75,615.6v6" stroke="#d8d8d8" stroke-width="1.6"/>
<text x="1018.45" y="636.6" font-size="13.6" text-anchor="middle" fill="#dcdcd4" textLength="7.8" lengthAdjust="spacingAndGlyphs">0</text>
<path d="M1018.7,615.5h-6" stroke="#d8d8d8" stroke-width="1.6"/>
<text x="1012.3" y="622.7" font-size="13.6" text-anchor="end" fill="#dcdcd4" textLength="7.8" lengthAdjust="spacingAndGlyphs">0</text>
<path d="M1071.88,615.6v6" stroke="#d8d8d8" stroke-width="1.6"/>
<text x="1071.58" y="636.6" font-size="13.6" text-anchor="middle" fill="#dcdcd4" textLength="28" lengthAdjust="spacingAndGlyphs">0,05</text>
<path d="M1018.7,575.45h-6" stroke="#d8d8d8" stroke-width="1.6"/>
<text x="1012.3" y="580.75" font-size="13.6" text-anchor="end" fill="#dcdcd4" textLength="28" lengthAdjust="spacingAndGlyphs">0,05</text>
<path d="M1125,615.6v6" stroke="#d8d8d8" stroke-width="1.6"/>
<text x="1124.7" y="636.6" font-size="13.6" text-anchor="middle" fill="#dcdcd4" textLength="20.4" lengthAdjust="spacingAndGlyphs">0,1</text>
<path d="M1018.7,534.4h-6" stroke="#d8d8d8" stroke-width="1.6"/>
<text x="1012.3" y="539.7" font-size="13.6" text-anchor="end" fill="#dcdcd4" textLength="20.4" lengthAdjust="spacingAndGlyphs">0,1</text>
<path d="M1178.12,615.6v6" stroke="#d8d8d8" stroke-width="1.6"/>
<text x="1177.83" y="636.6" font-size="13.6" text-anchor="middle" fill="#dcdcd4" textLength="28" lengthAdjust="spacingAndGlyphs">0,15</text>
<path d="M1018.7,493.35h-6" stroke="#d8d8d8" stroke-width="1.6"/>
<text x="1012.3" y="498.65" font-size="13.6" text-anchor="end" fill="#dcdcd4" textLength="28" lengthAdjust="spacingAndGlyphs">0,15</text>
<path d="M1231.25,615.6v6" stroke="#d8d8d8" stroke-width="1.6"/>
<text x="1230.95" y="636.6" font-size="13.6" text-anchor="middle" fill="#dcdcd4" textLength="20.4" lengthAdjust="spacingAndGlyphs">0,2</text>
<path d="M1018.7,452.3h-6" stroke="#d8d8d8" stroke-width="1.6"/>
<text x="1012.3" y="457.6" font-size="13.6" text-anchor="end" fill="#dcdcd4" textLength="20.4" lengthAdjust="spacingAndGlyphs">0,2</text>
<path d="M1284.38,615.6v6" stroke="#d8d8d8" stroke-width="1.6"/>
<text x="1284.08" y="636.6" font-size="13.6" text-anchor="middle" fill="#dcdcd4" textLength="28" lengthAdjust="spacingAndGlyphs">0,25</text>
<path d="M1018.7,411.25h-6" stroke="#d8d8d8" stroke-width="1.6"/>
<text x="1012.3" y="416.55" font-size="13.6" text-anchor="end" fill="#dcdcd4" textLength="28" lengthAdjust="spacingAndGlyphs">0,25</text>
<path d="M1337.5,615.6v6" stroke="#d8d8d8" stroke-width="1.6"/>
<text x="1337.2" y="636.6" font-size="13.6" text-anchor="middle" fill="#dcdcd4" textLength="20.4" lengthAdjust="spacingAndGlyphs">0,3</text>
<path d="M1018.7,370.2h-6" stroke="#d8d8d8" stroke-width="1.6"/>
<text x="1012.3" y="375.5" font-size="13.6" text-anchor="end" fill="#dcdcd4" textLength="20.4" lengthAdjust="spacingAndGlyphs">0,3</text>
<path d="M1390.62,615.6v6" stroke="#d8d8d8" stroke-width="1.6"/>
<text x="1390.33" y="636.6" font-size="13.6" text-anchor="middle" fill="#dcdcd4" textLength="28" lengthAdjust="spacingAndGlyphs">0,35</text>
<path d="M1018.7,329.15h-6" stroke="#d8d8d8" stroke-width="1.6"/>
<text x="1012.3" y="334.45" font-size="13.6" text-anchor="end" fill="#dcdcd4" textLength="28" lengthAdjust="spacingAndGlyphs">0,35</text>
<path d="M1443.75,615.6v6" stroke="#d8d8d8" stroke-width="1.6"/>
<text x="1443.45" y="636.6" font-size="13.6" text-anchor="middle" fill="#dcdcd4" textLength="20.4" lengthAdjust="spacingAndGlyphs">0,4</text>
<path d="M1018.7,288.1h-6" stroke="#d8d8d8" stroke-width="1.6"/>
<text x="1012.3" y="293.4" font-size="13.6" text-anchor="end" fill="#dcdcd4" textLength="20.4" lengthAdjust="spacingAndGlyphs">0,4</text>
<path d="M1496.88,615.6v6" stroke="#d8d8d8" stroke-width="1.6"/>
<text x="1496.58" y="636.6" font-size="13.6" text-anchor="middle" fill="#dcdcd4" textLength="28" lengthAdjust="spacingAndGlyphs">0,45</text>
<path d="M1018.7,247.05h-6" stroke="#d8d8d8" stroke-width="1.6"/>
<text x="1012.3" y="252.35" font-size="13.6" text-anchor="end" fill="#dcdcd4" textLength="28" lengthAdjust="spacingAndGlyphs">0,45</text>
<path d="M1550,615.6v6" stroke="#d8d8d8" stroke-width="1.6"/>
<text x="1549.7" y="636.6" font-size="13.6" text-anchor="middle" fill="#dcdcd4" textLength="20.4" lengthAdjust="spacingAndGlyphs">0,5</text>
<path d="M1018.7,206h-6" stroke="#d8d8d8" stroke-width="1.6"/>
<text x="1012.3" y="211.3" font-size="13.6" text-anchor="end" fill="#dcdcd4" textLength="20.4" lengthAdjust="spacingAndGlyphs">0,5</text>
<path d="M1603.12,615.6v6" stroke="#d8d8d8" stroke-width="1.6"/>
<text x="1602.83" y="636.6" font-size="13.6" text-anchor="middle" fill="#dcdcd4" textLength="28" lengthAdjust="spacingAndGlyphs">0,55</text>
<path d="M1018.7,164.95h-6" stroke="#d8d8d8" stroke-width="1.6"/>
<text x="1012.3" y="170.25" font-size="13.6" text-anchor="end" fill="#dcdcd4" textLength="28" lengthAdjust="spacingAndGlyphs">0,55</text>
<text x="1322" y="117.9" font-size="13.6" text-anchor="middle" fill="#dcdcd4" textLength="83.3" lengthAdjust="spacingAndGlyphs">CIE 1976 u'v'</text>
<rect x="1144.6" y="146.8" width="13.6" height="13.6" fill="none" stroke="#fff" stroke-width="1.5" stroke-opacity="0.92"/>
<rect x="1156.7" y="158.6" width="13.6" height="13.6" fill="none" stroke="#fff" stroke-width="1.5" stroke-opacity="0.92"/>
<rect x="1168.7" y="170.6" width="13.6" height="13.6" fill="none" stroke="#fff" stroke-width="1.5" stroke-opacity="0.92"/>
<rect x="1183.6" y="185.7" width="13.6" height="13.6" fill="none" stroke="#fff" stroke-width="1.5" stroke-opacity="0.92"/>
<rect x="1201.7" y="202.7" width="13.6" height="13.6" fill="none" stroke="#fff" stroke-width="1.5" stroke-opacity="0.92"/>
<rect x="1228.3" y="154.8" width="13.6" height="13.6" fill="none" stroke="#fff" stroke-width="1.5" stroke-opacity="0.92"/>
<rect x="1227.2" y="166.6" width="13.6" height="13.6" fill="none" stroke="#fff" stroke-width="1.5" stroke-opacity="0.92"/>
<rect x="1226.2" y="177.9" width="13.6" height="13.6" fill="none" stroke="#fff" stroke-width="1.5" stroke-opacity="0.92"/>
<rect x="1224.9" y="191.2" width="13.6" height="13.6" fill="none" stroke="#fff" stroke-width="1.5" stroke-opacity="0.92"/>
<rect x="1223.5" y="206.9" width="13.6" height="13.6" fill="none" stroke="#fff" stroke-width="1.5" stroke-opacity="0.92"/>
<rect x="1159.3" y="234.5" width="13.6" height="13.6" fill="none" stroke="#fff" stroke-width="1.5" stroke-opacity="0.92"/>
<rect x="1171.6" y="232.6" width="13.6" height="13.6" fill="none" stroke="#fff" stroke-width="1.5" stroke-opacity="0.92"/>
<rect x="1183.6" y="230.9" width="13.6" height="13.6" fill="none" stroke="#fff" stroke-width="1.5" stroke-opacity="0.92"/>
<rect x="1197.7" y="228.7" width="13.6" height="13.6" fill="none" stroke="#fff" stroke-width="1.5" stroke-opacity="0.92"/>
<rect x="1210.7" y="226.6" width="13.6" height="13.6" fill="none" stroke="#fff" stroke-width="1.5" stroke-opacity="0.92"/>
<rect x="1491.6" y="179.2" width="13.6" height="13.6" fill="none" stroke="#fff" stroke-width="1.5" stroke-opacity="0.92"/>
<rect x="1427.5" y="189.4" width="13.6" height="13.6" fill="none" stroke="#fff" stroke-width="1.5" stroke-opacity="0.92"/>
<rect x="1372.5" y="199.8" width="13.6" height="13.6" fill="none" stroke="#fff" stroke-width="1.5" stroke-opacity="0.92"/>
<rect x="1323.6" y="206.5" width="13.6" height="13.6" fill="none" stroke="#fff" stroke-width="1.5" stroke-opacity="0.92"/>
<rect x="1270.6" y="215.7" width="13.6" height="13.6" fill="none" stroke="#fff" stroke-width="1.5" stroke-opacity="0.92"/>
<rect x="1336.2" y="337.5" width="13.6" height="13.6" fill="none" stroke="#fff" stroke-width="1.5" stroke-opacity="0.92"/>
<rect x="1303.7" y="305.3" width="13.6" height="13.6" fill="none" stroke="#fff" stroke-width="1.5" stroke-opacity="0.92"/>
<rect x="1278.0" y="279.5" width="13.6" height="13.6" fill="none" stroke="#fff" stroke-width="1.5" stroke-opacity="0.92"/>
<rect x="1258.7" y="259.7" width="13.6" height="13.6" fill="none" stroke="#fff" stroke-width="1.5" stroke-opacity="0.92"/>
<rect x="1239.7" y="240.5" width="13.6" height="13.6" fill="none" stroke="#fff" stroke-width="1.5" stroke-opacity="0.92"/>
<rect x="1198.4" y="478.8" width="13.6" height="13.6" fill="none" stroke="#fff" stroke-width="1.5" stroke-opacity="0.92"/>
<rect x="1206.7" y="392.9" width="13.6" height="13.6" fill="none" stroke="#fff" stroke-width="1.5" stroke-opacity="0.92"/>
<rect x="1212.6" y="335.5" width="13.6" height="13.6" fill="none" stroke="#fff" stroke-width="1.5" stroke-opacity="0.92"/>
<rect x="1216.6" y="290.4" width="13.6" height="13.6" fill="none" stroke="#fff" stroke-width="1.5" stroke-opacity="0.92"/>
<rect x="1219.4" y="253.7" width="13.6" height="13.6" fill="none" stroke="#fff" stroke-width="1.5" stroke-opacity="0.92"/>
<rect x="1222.0" y="223.8" width="13.4" height="13.4" fill="none" stroke="#111" stroke-width="1.6" stroke-opacity="1"/>
<circle cx="1152.4" cy="158.9" r="3.5" fill="#0ab90a" stroke="#141414" stroke-width="1.4"/>
<circle cx="1163.5" cy="169.3" r="3.65" fill="#45be45" stroke="#141414" stroke-width="1.4"/>
<circle cx="1177.0" cy="181.8" r="4.15" fill="#68be68" stroke="#141414" stroke-width="1.4"/>
<circle cx="1192.2" cy="195.3" r="4.05" fill="#85be85" stroke="#141414" stroke-width="1.4"/>
<circle cx="1211.0" cy="210.5" r="4.2" fill="#9ebe9e" stroke="#141414" stroke-width="1.4"/>
<circle cx="1243.6" cy="165.9" r="3.8" fill="#b2b214" stroke="#141414" stroke-width="1.4"/>
<circle cx="1242.4" cy="176.6" r="3.8" fill="#bebe45" stroke="#141414" stroke-width="1.4"/>
<circle cx="1240.7" cy="187.4" r="3.85" fill="#bebe68" stroke="#141414" stroke-width="1.4"/>
<circle cx="1238.9" cy="199.5" r="3.85" fill="#bebe85" stroke="#141414" stroke-width="1.4"/>
<circle cx="1236.5" cy="214.7" r="3.9" fill="#bebe9e" stroke="#141414" stroke-width="1.4"/>
<circle cx="1161.8" cy="244.5" r="4.2" fill="#00b9c3" stroke="#141414" stroke-width="1.4"/>
<circle cx="1177.0" cy="242.0" r="4.2" fill="#45bebe" stroke="#141414" stroke-width="1.4"/>
<circle cx="1190.4" cy="238.7" r="3.65" fill="#68bebe" stroke="#141414" stroke-width="1.4"/>
<circle cx="1205.5" cy="236.5" r="3.45" fill="#85bebe" stroke="#141414" stroke-width="1.4"/>
<circle cx="1218.5" cy="233.4" r="3.9" fill="#9ebebe" stroke="#141414" stroke-width="1.4"/>
<circle cx="1498.6" cy="183.4" r="4" fill="#d40000" stroke="#141414" stroke-width="1.4"/>
<circle cx="1449.1" cy="193.3" r="4" fill="#be4545" stroke="#141414" stroke-width="1.4"/>
<circle cx="1393.7" cy="202.2" r="3.65" fill="#be6868" stroke="#141414" stroke-width="1.4"/>
<circle cx="1343.2" cy="212.1" r="3.85" fill="#be8585" stroke="#141414" stroke-width="1.4"/>
<circle cx="1288.4" cy="221.5" r="3.65" fill="#be9e9e" stroke="#141414" stroke-width="1.4"/>
<circle cx="1348.6" cy="330.4" r="3.65" fill="#b900c3" stroke="#141414" stroke-width="1.4"/>
<circle cx="1318.4" cy="306.1" r="4" fill="#be45be" stroke="#141414" stroke-width="1.4"/>
<circle cx="1291.2" cy="281.4" r="3.8" fill="#be68be" stroke="#141414" stroke-width="1.4"/>
<circle cx="1272.4" cy="265.0" r="3.8" fill="#be85be" stroke="#141414" stroke-width="1.4"/>
<circle cx="1251.9" cy="246.0" r="4.05" fill="#be9ebe" stroke="#141414" stroke-width="1.4"/>
<circle cx="1199.6" cy="478.4" r="3.5" fill="#0808d4" stroke="#141414" stroke-width="1.4"/>
<circle cx="1205.5" cy="403.7" r="3.65" fill="#4545be" stroke="#141414" stroke-width="1.4"/>
<circle cx="1216.4" cy="342.8" r="3.2" fill="#6868be" stroke="#141414" stroke-width="1.4"/>
<circle cx="1223.4" cy="298.7" r="3.65" fill="#8585be" stroke="#141414" stroke-width="1.4"/>
<circle cx="1229.8" cy="261.1" r="4.2" fill="#9e9ebe" stroke="#141414" stroke-width="1.4"/>
<circle cx="1234.1" cy="231.2" r="3.8" fill="#fff" stroke="#141414" stroke-width="1.4"/></svg>
<div class="a" style="left:1440px;top:462px;width:213px;height:146px;overflow:hidden" class="cg"><div class="a cg" style="left:0;top:0;width:213px;height:146px"><i style="left:0px;top:0px;width:213px;height:2px;background:linear-gradient(90deg,#acff00 0px,#fffb00 177px,#ffea00 213px)"></i>
<i style="left:0px;top:2px;width:213px;height:2px;background:linear-gradient(90deg,#acff00 0px,#fffb00 176px,#ffe900 213px)"></i>
<i style="left:0px;top:4px;width:213px;height:2px;background:linear-gradient(90deg,#adff00 0px,#fffb00 174px,#ffe800 213px)"></i>
<i style="left:0px;top:6px;width:213px;height:2px;background:linear-gradient(90deg,#aeff00 0px,#fffb00 172px,#ffe700 213px)"></i>
<i style="left:0px;top:8px;width:213px;height:2px;background:linear-gradient(90deg,#aeff00 0px,#fffb00 170px,#ffe600 213px)"></i>
<i style="left:0px;top:10px;width:213px;height:2px;background:linear-gradient(90deg,#afff00 0px,#fffb00 169px,#ffe600 213px)"></i>
<i style="left:0px;top:12px;width:213px;height:2px;background:linear-gradient(90deg,#b0ff00 0px,#fffb00 167px,#ffe500 213px)"></i>
<i style="left:0px;top:14px;width:213px;height:2px;background:linear-gradient(90deg,#b1ff00 0px,#fffb00 165px,#ffe400 213px)"></i>
<i style="left:0px;top:16px;width:213px;height:2px;background:linear-gradient(90deg,#b1ff00 0px,#fffb00 163px,#ffe300 213px)"></i>
<i style="left:0px;top:18px;width:213px;height:2px;background:linear-gradient(90deg,#b2ff01 0px,#fffb00 161px,#ffe200 213px)"></i>
<i style="left:0px;top:20px;width:213px;height:2px;background:linear-gradient(90deg,#b3ff01 0px,#fffb00 160px,#ffe100 213px)"></i>
<i style="left:0px;top:22px;width:213px;height:2px;background:linear-gradient(90deg,#b3ff01 0px,#fffb00 158px,#ffe100 213px)"></i>
<i style="left:0px;top:24px;width:213px;height:2px;background:linear-gradient(90deg,#b4ff02 0px,#fffb00 156px,#ffe000 213px)"></i>
<i style="left:0px;top:26px;width:213px;height:2px;background:linear-gradient(90deg,#b5ff02 0px,#fffb00 154px,#ffdf00 213px)"></i>
<i style="left:0px;top:28px;width:213px;height:2px;background:linear-gradient(90deg,#b6ff03 0px,#fffb00 152px,#ffde00 213px)"></i>
<i style="left:0px;top:30px;width:213px;height:2px;background:linear-gradient(90deg,#b6ff03 0px,#fffb00 151px,#fd0 213px)"></i>
<i style="left:0px;top:32px;width:213px;height:2px;background:linear-gradient(90deg,#b7ff03 0px,#fffb00 149px,#ffdc00 213px)"></i>
<i style="left:0px;top:34px;width:213px;height:2px;background:linear-gradient(90deg,#b8ff04 0px,#fffb00 147px,#ffdc00 213px)"></i>
<i style="left:0px;top:36px;width:213px;height:2px;background:linear-gradient(90deg,#b9ff04 0px,#fffb00 145px,#ffdb00 213px)"></i>
<i style="left:0px;top:38px;width:213px;height:2px;background:linear-gradient(90deg,#b9ff05 0px,#fffb00 144px,#ffda00 213px)"></i>
<i style="left:0px;top:40px;width:213px;height:2px;background:linear-gradient(90deg,#baff05 0px,#fffb00 142px,#ffd900 213px)"></i>
<i style="left:0px;top:42px;width:213px;height:2px;background:linear-gradient(90deg,#bbff05 0px,#fffb00 140px,#ffd800 213px)"></i>
<i style="left:0px;top:44px;width:213px;height:2px;background:linear-gradient(90deg,#bcff06 0px,#fffb00 138px,#ffd800 213px)"></i>
<i style="left:0px;top:46px;width:213px;height:2px;background:linear-gradient(90deg,#bcff06 0px,#fffb00 137px,#ffd700 213px)"></i>
<i style="left:0px;top:48px;width:213px;height:2px;background:linear-gradient(90deg,#bdff07 0px,#fffb00 135px,#ffd600 213px)"></i>
<i style="left:0px;top:50px;width:213px;height:2px;background:linear-gradient(90deg,#beff07 0px,#fffb00 133px,#ffd500 213px)"></i>
<i style="left:0px;top:52px;width:213px;height:2px;background:linear-gradient(90deg,#bfff08 0px,#fffb00 131px,#ffd400 213px)"></i>
<i style="left:0px;top:54px;width:213px;height:2px;background:linear-gradient(90deg,#bfff08 0px,#fffb00 129px,#ffd400 213px)"></i>
<i style="left:0px;top:56px;width:213px;height:2px;background:linear-gradient(90deg,#c0ff08 0px,#fffb00 128px,#ffd300 213px)"></i>
<i style="left:0px;top:58px;width:213px;height:2px;background:linear-gradient(90deg,#c1ff09 0px,#fffb00 126px,#ffd200 213px)"></i>
<i style="left:0px;top:60px;width:213px;height:2px;background:linear-gradient(90deg,#c2ff09 0px,#fffb00 124px,#ffd100 213px)"></i>
<i style="left:0px;top:62px;width:213px;height:2px;background:linear-gradient(90deg,#c2ff0a 0px,#fffb00 122px,#ffd100 213px)"></i>
<i style="left:0px;top:64px;width:213px;height:2px;background:linear-gradient(90deg,#c3ff0a 0px,#fffb00 121px,#ffd000 213px)"></i>
<i style="left:0px;top:66px;width:213px;height:2px;background:linear-gradient(90deg,#c4ff0b 0px,#fffb00 119px,#ffcf00 213px)"></i>
<i style="left:0px;top:68px;width:213px;height:2px;background:linear-gradient(90deg,#c5ff0b 0px,#fffb00 117px,#ffce00 213px)"></i>
<i style="left:0px;top:70px;width:213px;height:2px;background:linear-gradient(90deg,#c6ff0b 0px,#fffb00 115px,#ffcd00 213px)"></i>
<i style="left:0px;top:72px;width:213px;height:2px;background:linear-gradient(90deg,#c6ff0c 0px,#fffb00 114px,#ffcd00 213px)"></i>
<i style="left:0px;top:74px;width:213px;height:2px;background:linear-gradient(90deg,#c7ff0c 0px,#fffb00 112px,#fc0 213px)"></i>
<i style="left:0px;top:76px;width:213px;height:2px;background:linear-gradient(90deg,#c8ff0d 0px,#fffb00 110px,#ffcb00 213px)"></i>
<i style="left:0px;top:78px;width:213px;height:2px;background:linear-gradient(90deg,#c9ff0d 0px,#fffb01 108px,#ffca00 213px)"></i>
<i style="left:0px;top:80px;width:213px;height:2px;background:linear-gradient(90deg,#caff0e 0px,#fffb02 106px,#ffca00 213px)"></i>
<i style="left:0px;top:82px;width:213px;height:2px;background:linear-gradient(90deg,#cbff0e 0px,#fffb02 105px,#ffc900 213px)"></i>
<i style="left:0px;top:84px;width:213px;height:2px;background:linear-gradient(90deg,#cbff0f 0px,#fffb03 103px,#ffc800 213px)"></i>
<i style="left:0px;top:86px;width:213px;height:2px;background:linear-gradient(90deg,#ccff0f 0px,#fffb04 101px,#ffc700 213px)"></i>
<i style="left:0px;top:88px;width:213px;height:2px;background:linear-gradient(90deg,#cdff0f 0px,#fffb04 99px,#ffc600 213px)"></i>
<i style="left:0px;top:90px;width:213px;height:2px;background:linear-gradient(90deg,#ceff10 0px,#fffb05 98px,#ffc600 213px)"></i>
<i style="left:0px;top:92px;width:213px;height:2px;background:linear-gradient(90deg,#cfff10 0px,#fffb06 96px,#ffc500 213px)"></i>
<i style="left:0px;top:94px;width:213px;height:2px;background:linear-gradient(90deg,#d0ff11 0px,#fffb06 94px,#ffc400 213px)"></i>
<i style="left:0px;top:96px;width:213px;height:2px;background:linear-gradient(90deg,#d0ff11 0px,#fffb07 92px,#ffc300 213px)"></i>
<i style="left:0px;top:98px;width:213px;height:2px;background:linear-gradient(90deg,#d1ff12 0px,#fffb07 91px,#ffc300 213px)"></i>
<i style="left:0px;top:100px;width:213px;height:2px;background:linear-gradient(90deg,#d2ff12 0px,#fffb08 89px,#ffc200 213px)"></i>
<i style="left:0px;top:102px;width:213px;height:2px;background:linear-gradient(90deg,#d3ff13 0px,#fffb09 87px,#ffc100 213px)"></i>
<i style="left:0px;top:104px;width:213px;height:2px;background:linear-gradient(90deg,#d4ff13 0px,#fffb0a 85px,#ffc000 213px)"></i>
<i style="left:0px;top:106px;width:213px;height:2px;background:linear-gradient(90deg,#d5ff14 0px,#fffb0a 83px,#ffc000 213px)"></i>
<i style="left:0px;top:108px;width:213px;height:2px;background:linear-gradient(90deg,#d6ff14 0px,#fffb0b 82px,#ffbf00 213px)"></i>
<i style="left:0px;top:110px;width:213px;height:2px;background:linear-gradient(90deg,#d7ff15 0px,#fffb0b 80px,#ffbe00 213px)"></i>
<i style="left:0px;top:112px;width:213px;height:2px;background:linear-gradient(90deg,#d7ff15 0px,#fffb0c 78px,#ffbd00 213px)"></i>
<i style="left:0px;top:114px;width:213px;height:2px;background:linear-gradient(90deg,#d8ff16 0px,#fffb0d 76px,#ffbd00 213px)"></i>
<i style="left:0px;top:116px;width:213px;height:2px;background:linear-gradient(90deg,#d9ff16 0px,#fffb0d 75px,#ffbc00 213px)"></i>
<i style="left:0px;top:118px;width:213px;height:2px;background:linear-gradient(90deg,#daff17 0px,#fffb0e 73px,#fb0 213px)"></i>
<i style="left:0px;top:120px;width:213px;height:2px;background:linear-gradient(90deg,#dbff17 0px,#fffb0f 71px,#fb0 213px)"></i>
<i style="left:0px;top:122px;width:213px;height:2px;background:linear-gradient(90deg,#dcff18 0px,#fffb10 69px,#ffba00 213px)"></i>
<i style="left:0px;top:124px;width:213px;height:2px;background:linear-gradient(90deg,#ddff18 0px,#fffb10 68px,#ffb900 213px)"></i>
<i style="left:0px;top:126px;width:213px;height:2px;background:linear-gradient(90deg,#deff19 0px,#fffb11 66px,#ffb800 213px)"></i>
<i style="left:0px;top:128px;width:213px;height:2px;background:linear-gradient(90deg,#dfff19 0px,#fffb12 64px,#ffb800 213px)"></i>
<i style="left:0px;top:130px;width:213px;height:2px;background:linear-gradient(90deg,#e0ff1a 0px,#fffb12 62px,#ffb800 211px,#ffb700 213px)"></i>
<i style="left:0px;top:132px;width:213px;height:2px;background:linear-gradient(90deg,#e1ff1a 0px,#fffa13 61px,#ffb701 210px,#ffb600 213px)"></i>
<i style="left:0px;top:134px;width:213px;height:2px;background:linear-gradient(90deg,#e1ff1b 0px,#fffb14 59px,#ffb701 208px,#ffb501 213px)"></i>
<i style="left:0px;top:136px;width:213px;height:2px;background:linear-gradient(90deg,#e2ff1b 0px,#fffb14 57px,#ffb802 205px,#ffb501 213px)"></i>
<i style="left:0px;top:138px;width:213px;height:2px;background:linear-gradient(90deg,#e3ff1c 0px,#fffa15 56px,#ffb702 205px,#ffb401 213px)"></i>
<i style="left:0px;top:140px;width:213px;height:2px;background:linear-gradient(90deg,#e4ff1c 0px,#fffa16 54px,#ffb703 202px,#ffb302 213px)"></i>
<i style="left:0px;top:142px;width:213px;height:2px;background:linear-gradient(90deg,#e5ff1d 0px,#fffb17 52px,#ffb703 200px,#ffb302 213px)"></i>
<i style="left:0px;top:144px;width:213px;height:2px;background:linear-gradient(90deg,#e6ff1d 0px,#fffb17 50px,#ffb704 198px,#ffb202 213px)"></i></div></div>
<svg width="1662" height="1010" viewBox="0 0 1662 1010"><path d="M1440.3,462.9L1652,462.9L1652,592.646L1440.3,477.517Z" fill="#000" fill-opacity=".375"/><rect x="1440.8" y="463.4" width="211" height="144.3" fill="none" stroke="#909090" stroke-width="1.4"/><rect x="1539.3" y="527.5" width="13.4" height="13.4" fill="none" stroke="#fff" stroke-width="1.3" stroke-opacity=".92"/><circle cx="1558" cy="592" r="4.3" fill="#c2c000" stroke="#111" stroke-width="1.2"/></svg>
<div class="a" style="left:0;top:933px;width:1662px;height:77px;background:linear-gradient(#424242,#2a2a2a)"></div>
<div class="a" style="left:1.3px;top:933.5px;width:56.4px;height:78px;border-radius:5px 5px 0 0;background:linear-gradient(#8e8e8e,#5c5c5c)"></div>
<div class="a" style="left:20.1px;top:936.2px;width:18.8px;height:18.8px;border-radius:50%;background:linear-gradient(#6e6e6e,#9a9a9a)"></div>
<div class="a" style="left:24px;top:941.7px;width:0;height:0;border-left:5.5px solid transparent;border-right:5.5px solid transparent;border-bottom:5.5px solid #2a2a2a"></div>
<div class="a" style="left:7.6px;top:965.8px;width:43.8px;height:38.3px;box-sizing:border-box;border:1px solid #8a8a00;border-radius:5px;background:#ffff00"></div>
<div class="a" style="left:64.7px;top:933.7px;width:187.7px;height:75.6px;border-radius:5px;background:linear-gradient(#8e8e8e,#5c5c5c)"></div>
<div class="a" style="left:71.3px;top:940.2px;width:174.9px;height:44.8px;box-sizing:border-box;border-radius:5px;border:1px solid rgba(90,90,40,.55);background:#bfbfa3"></div>
<div class="t m" style="left:146.29px;top:993.73px;font-size:12.6px;color:#363636;font-weight:bold;">20%</div>
<div class="a" style="left:254.7px;top:933.7px;width:187.7px;height:75.6px;border-radius:5px;background:linear-gradient(#8e8e8e,#5c5c5c)"></div>
<div class="a" style="left:261.3px;top:940.2px;width:174.9px;height:44.8px;box-sizing:border-box;border-radius:5px;border:1px solid rgba(90,90,40,.55);background:#c0bf87"></div>
<div class="t m" style="left:336.29px;top:993.73px;font-size:12.6px;color:#363636;font-weight:bold;">40%</div>
<div class="a" style="left:444.7px;top:933.7px;width:187.7px;height:75.6px;border-radius:5px;background:linear-gradient(#8e8e8e,#5c5c5c)"></div>
<div class="a" style="left:451.3px;top:940.2px;width:174.9px;height:44.8px;box-sizing:border-box;border-radius:5px;border:1px solid rgba(90,90,40,.55);background:#bfbe6a"></div>
<div class="t m" style="left:526.29px;top:993.73px;font-size:12.6px;color:#363636;font-weight:bold;">60%</div>
<div class="a" style="left:634.7px;top:933.7px;width:187.7px;height:75.6px;border-radius:5px;background:linear-gradient(#8e8e8e,#5c5c5c)"></div>
<div class="a" style="left:641.3px;top:940.2px;width:174.9px;height:44.8px;box-sizing:border-box;border-radius:5px;border:1px solid rgba(90,90,40,.55);background:#c0bf4b"></div>
<div class="t m" style="left:716.29px;top:993.73px;font-size:12.6px;color:#363636;font-weight:bold;">80%</div>
<div class="a" style="left:824.7px;top:933.7px;width:187.7px;height:75.6px;border-radius:5px;background:linear-gradient(#1c1c1c,#363636)"></div>
<div class="a" style="left:831.3px;top:940.2px;width:174.9px;height:44.8px;box-sizing:border-box;border-radius:5px;border:1px solid rgba(90,90,40,.55);background:#c2c000"></div>
<div class="t m" style="left:902.79px;top:993.73px;font-size:12.6px;color:#fff;font-weight:bold;">100%</div>
<div class="a" style="left:1266px;top:933.5px;width:60.5px;height:77px;border-radius:5px 5px 0 0;background:linear-gradient(#8e8e8e,#5c5c5c)"></div>
<div class="a" style="left:1266px;top:956px;width:60.5px;height:1px;background:#4a4a4a"></div>
<div class="a" style="left:1286.5px;top:935.5px;width:19px;height:19px;border-radius:50%;background:linear-gradient(#6e6e6e,#9a9a9a)"></div>
<div class="a" style="left:1290.5px;top:941.5px;width:0;height:0;border-left:5.5px solid transparent;border-right:5.5px solid transparent;border-bottom:5.5px solid #2a2a2a"></div>
<div class="a" style="left:1276.8px;top:964.6px;width:38.4px;height:37.4px;box-sizing:border-box;border:2px solid #262626;border-radius:6px;background:linear-gradient(#cdcdcd 0,#b8b8b8 50%,#8a8a8a 52%,#9a9a9a 100%)"></div>
<div class="a" style="left:1287.6px;top:975px;width:17.4px;height:17px;background:#000"></div>
<div class="a" style="left:1327.9px;top:932.4px;width:57.1px;height:38.8px;background:linear-gradient(#9a9a9a,#6e6e6e);border-radius:5px 0 0 0"></div>
<div class="a" style="left:1344.1px;top:940px;width:25px;height:25px;border-radius:50%;background:linear-gradient(#6a6a6a,#8c8c8c)"></div>
<div class="a" style="left:1386.2px;top:932.4px;width:54.8px;height:38.8px;background:linear-gradient(#9a9a9a,#6e6e6e);"></div>
<div class="a" style="left:1401.1px;top:940px;width:25px;height:25px;border-radius:50%;background:linear-gradient(#6a6a6a,#8c8c8c)"></div>
<div class="a" style="left:1442.2px;top:932.4px;width:55.1px;height:38.8px;background:linear-gradient(#9a9a9a,#6e6e6e);"></div>
<div class="a" style="left:1457.4px;top:940px;width:25px;height:25px;border-radius:50%;background:linear-gradient(#6a6a6a,#8c8c8c)"></div>
<div class="a" style="left:1498.5px;top:932.4px;width:55.3px;height:38.8px;background:linear-gradient(#9a9a9a,#6e6e6e);"></div>
<div class="a" style="left:1513.9px;top:940px;width:25px;height:25px;border-radius:50%;background:linear-gradient(#6a6a6a,#8c8c8c)"></div>
<div class="a" style="left:1555px;top:932.4px;width:54.6px;height:38.8px;background:linear-gradient(#9a9a9a,#6e6e6e);"></div>
<div class="a" style="left:1569.7px;top:940px;width:25px;height:25px;border-radius:50%;background:linear-gradient(#6a6a6a,#8c8c8c)"></div>
<div class="a" style="left:1610.8px;top:932.4px;width:54.6px;height:38.8px;background:linear-gradient(#9a9a9a,#6e6e6e);"></div>
<div class="a" style="left:1626.7px;top:940px;width:25px;height:25px;border-radius:50%;background:linear-gradient(#6a6a6a,#8c8c8c)"></div>
<svg width="1662" height="1010" viewBox="0 0 1662 1010"><rect x="1351.2" y="946.8" width="10.8" height="10.8" fill="#333"/><path d="M1409.6,946.2L1420.2,952.2L1409.6,958.2Z" fill="#333"/><path d="M1466.6,946.4h-2.9v11.6h2.9M1473.2,946.4h2.9v11.6h-2.9" fill="none" stroke="#333" stroke-width="2"/><path d="M1466.9,952.2h6.4" stroke="#333" stroke-width="1.8" stroke-dasharray="1.5 0.9"/><text x="1526.4" y="958.6" font-size="21" text-anchor="middle" fill="#333" font-weight="bold" textLength="17.5" lengthAdjust="spacingAndGlyphs">∞</text><path d="M1577.2,950.4a5.4,5.4 0 0 1 9.4,-1.6M1587.2,954a5.4,5.4 0 0 1 -9.4,1.6" fill="none" stroke="#333" stroke-width="2.8"/><path d="M1589.2,944.6v5.8h-5.8zM1575.2,959.8v-5.8h5.8z" fill="#333"/></svg>
<div class="a" style="left:1327.9px;top:972.6px;width:169.4px;height:38px;background:linear-gradient(#a2a2a2 0,#949494 8%,#6a6a6a 100%)"></div>
<div class="a" style="left:1498.6px;top:972.6px;width:164px;height:38px;background:linear-gradient(#a2a2a2 0,#949494 8%,#6a6a6a 100%)"></div>
<div class="a" style="left:1354.5px;top:980px;width:24px;height:24px;border-radius:50%;background:linear-gradient(#6e6e6e,#949494)"></div>
<div class="a" style="left:1621px;top:980px;width:24px;height:24px;border-radius:50%;background:linear-gradient(#6e6e6e,#949494)"></div>
<div class="t" style="left:1354.5px;top:977.3px;width:24px;text-align:center;font-size:27px;color:#3a3a3a">«</div>
<div class="t" style="left:1621px;top:977.3px;width:24px;text-align:center;font-size:27px;color:#3a3a3a">»</div>
<div class="t m" style="left:1400.00px;top:977.23px;font-size:27.6px;color:#3a3a3a;transform:scaleX(1.0104);-webkit-text-stroke:.7px #3a3a3a;">Back</div>
<div class="t m" style="left:1532.60px;top:977.23px;font-size:27.6px;color:#3a3a3a;transform:scaleX(1.1348);-webkit-text-stroke:.7px #3a3a3a;">Next</div>
</div>
</body></html>
